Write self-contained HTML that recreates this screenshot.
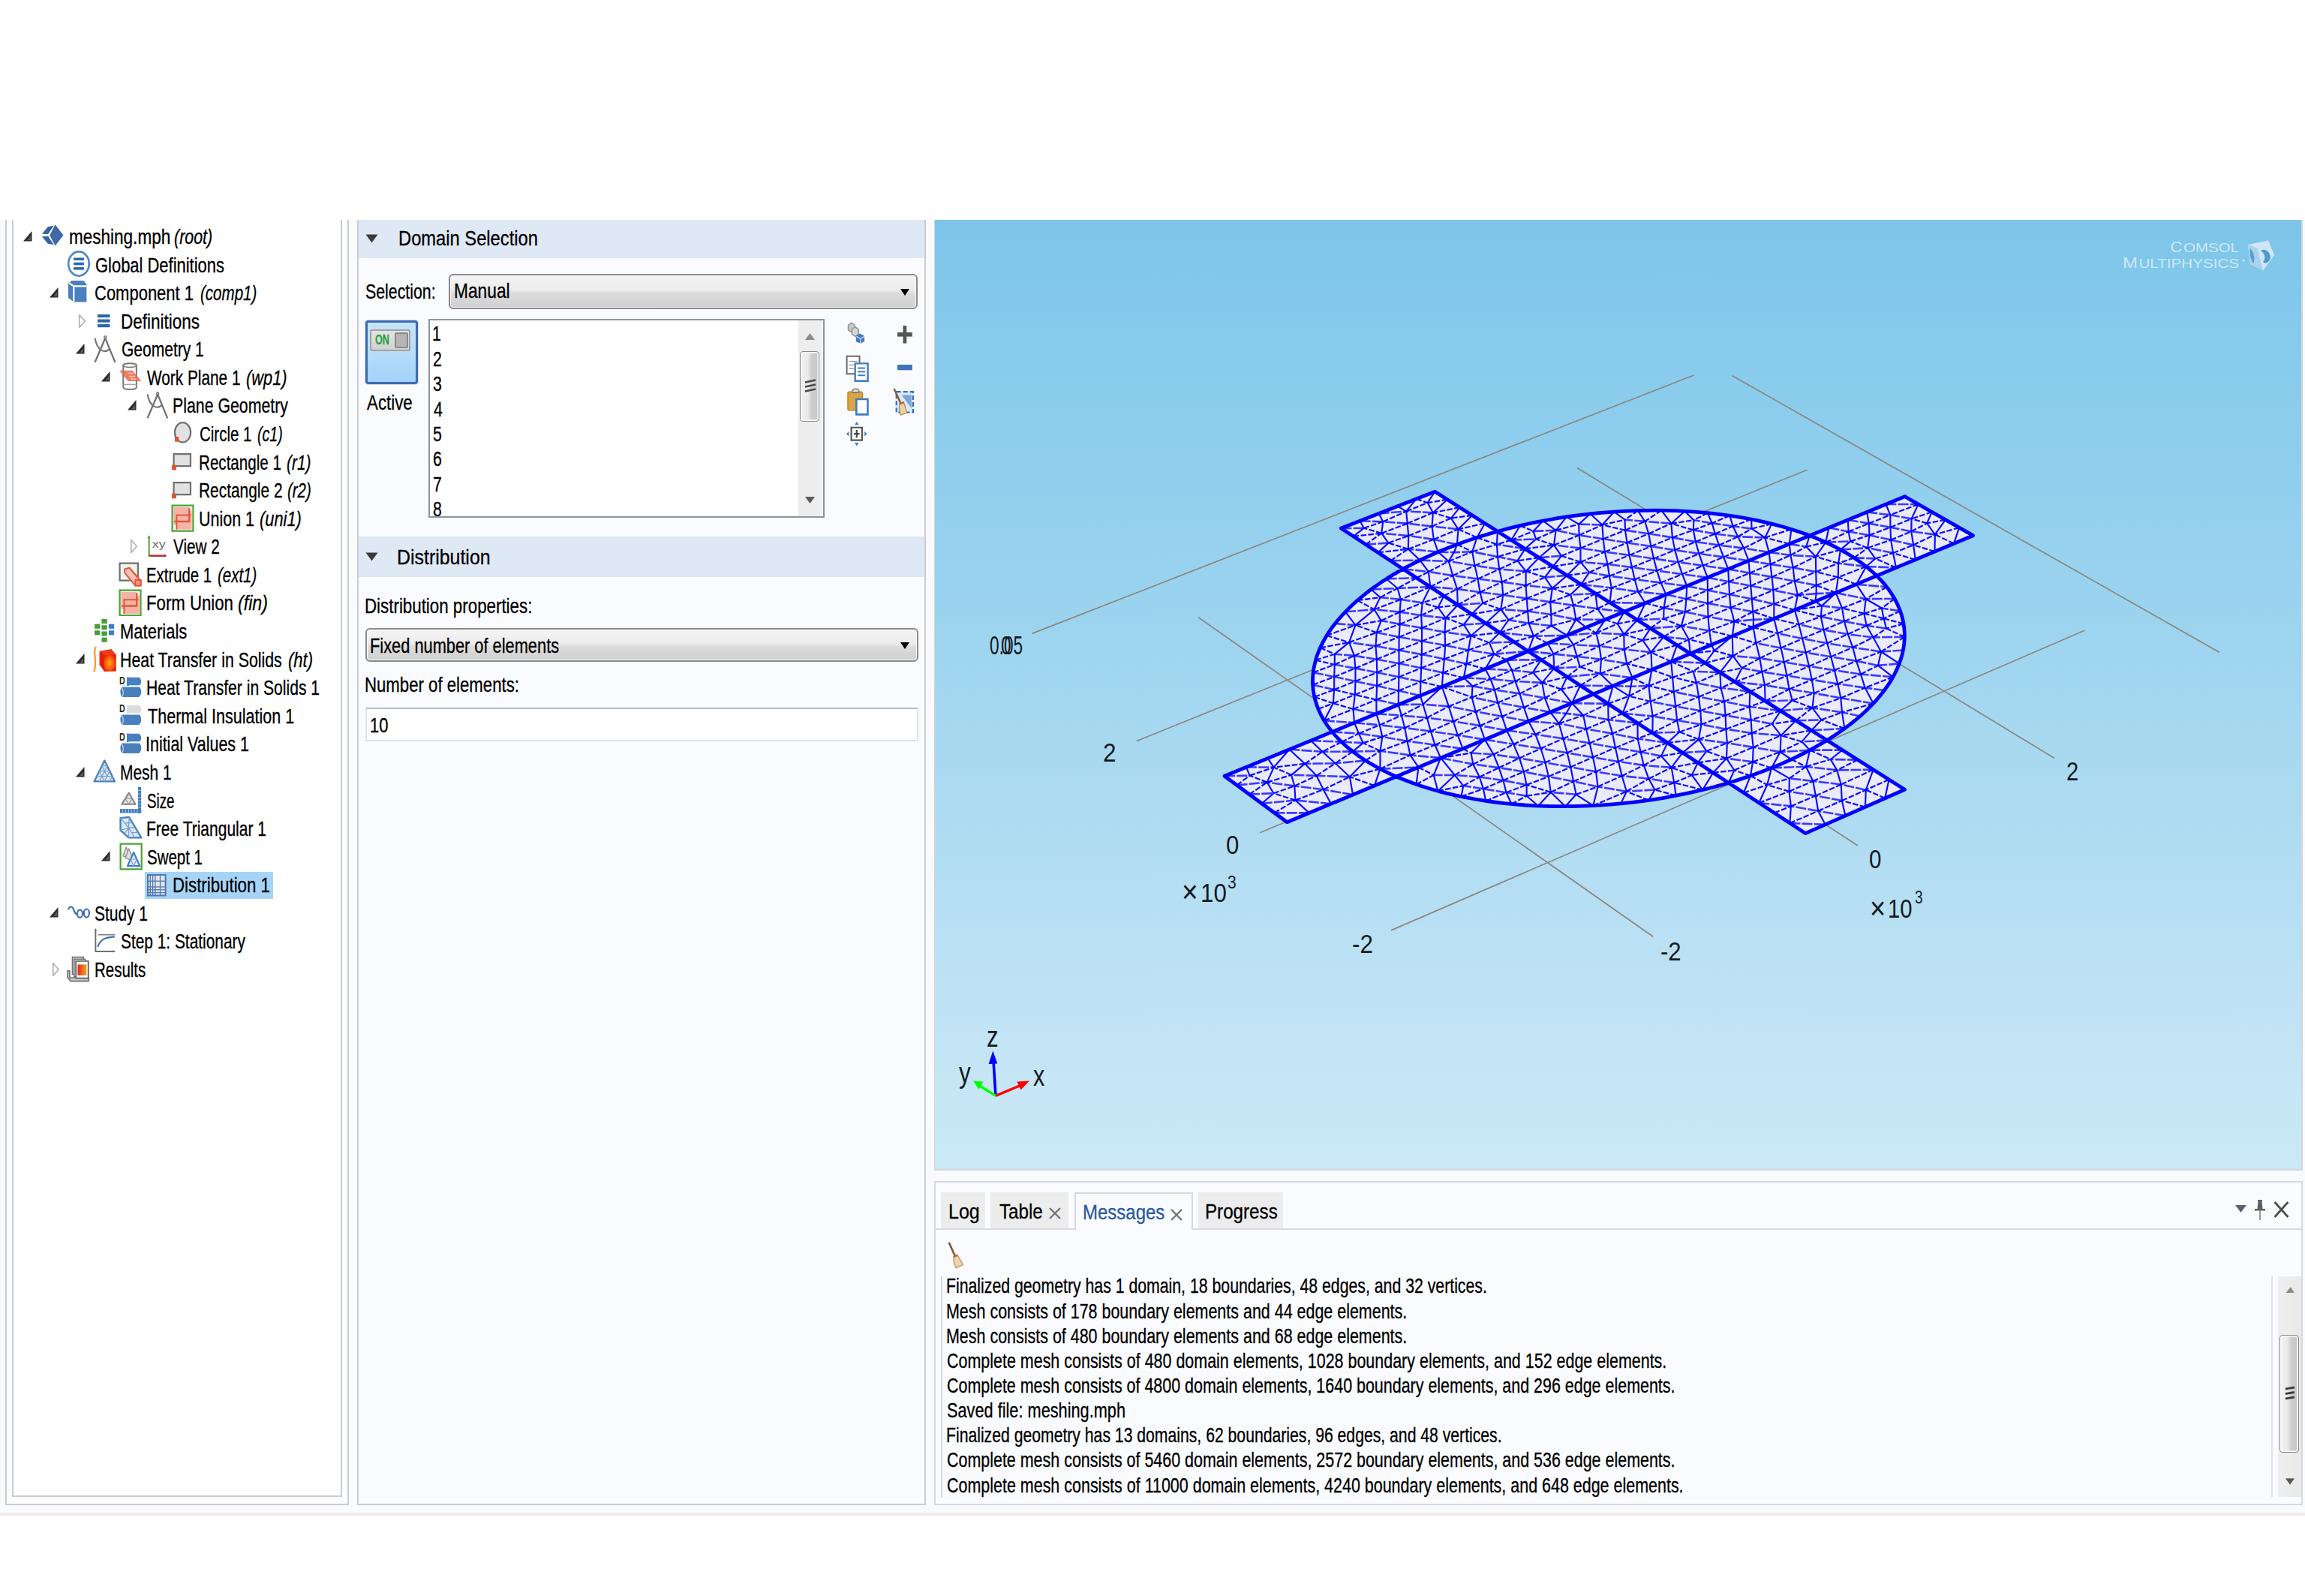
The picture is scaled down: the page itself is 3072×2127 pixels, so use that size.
<!DOCTYPE html><html><head><meta charset="utf-8"><title>COMSOL Multiphysics - meshing.mph</title><style>
html,body{margin:0;padding:0;background:#fff;}
body{width:3072px;height:2127px;position:relative;overflow:hidden;font-family:"Liberation Sans",sans-serif;color:#000;}
.a{position:absolute;box-sizing:border-box;}
.t{position:absolute;white-space:pre;line-height:1;transform-origin:0 0;color:#000;-webkit-text-stroke:0.3px currentColor;}
.combo{border:2px solid #8a8a8a;border-radius:6px;background:linear-gradient(#f4f4f4 0%,#ececec 45%,#dcdcdc 55%,#d0d0d0 100%);box-shadow:inset 0 0 0 1px #fafafa;}
</style></head><body>
<div class="a" style="left:0;top:293px;width:3072px;height:1723px;background:#f9fafd"></div>
<div class="a" style="left:0;top:2016px;width:3072px;height:4px;background:#eeebe9"></div>
<div class="a" style="left:7px;top:293px;width:458px;height:1713px;border:2px solid #cbcbd0;border-top:none;background:#fbfcfe"></div>
<div class="a" style="left:16px;top:293px;width:440px;height:1702px;border:2px solid #cbcbd0;border-top:none;background:#fff"></div>
<div class="a" style="left:192.5px;top:1161.8px;width:171.7px;height:36.6px;background:#a6d4f8"></div>
<div class="a" style="left:476px;top:293px;width:758px;height:1713px;border:2px solid #cbcbd0;border-top:none;background:#fafbfe"></div>
<div class="a" style="left:478px;top:293px;width:754px;height:51.2px;background:#dfe8f5"></div>
<svg class="a" style="left:487px;top:312.1px" width="17" height="12" viewBox="0 0 17 12"><path d="M0.5 0.5L16.5 0.5L8.5 11.5Z" fill="#3a3a3a"/></svg>
<div class="a" style="left:478px;top:714.6px;width:754px;height:54.8px;background:#dfe8f5"></div>
<svg class="a" style="left:487px;top:735.5px" width="17" height="12" viewBox="0 0 17 12"><path d="M0.5 0.5L16.5 0.5L8.5 11.5Z" fill="#3a3a3a"/></svg>
<div class="a combo" style="left:598px;top:365px;width:625px;height:47px"></div>
<svg class="a" style="left:1200px;top:385px" width="12" height="9" viewBox="0 0 12 9"><path d="M0 0L12 0L6 9Z" fill="#000"/></svg>
<div class="a" style="left:485.5px;top:425.5px;width:72.5px;height:87.5px;border-radius:5px;background:#d9dadd"></div>
<div class="a" style="left:487px;top:427px;width:69.5px;height:84.5px;border:3px solid #3c6bb8;border-radius:4px;background:linear-gradient(#c6e3fb,#bcdffa 40%,#a3d2f7)"></div>
<div class="a" style="left:492.8px;top:438.6px;width:54.4px;height:29.3px;border:2px solid #a2a2a2;border-radius:3px;background:linear-gradient(#e4e4e4,#d2d2d2)"></div>
<div class="a" style="left:525.8px;top:443px;width:18px;height:21px;border:2px solid #8a8a8a;border-radius:2px;background:#b4b4b4"></div>
<div class="a" style="left:571px;top:424.5px;width:528px;height:265.2px;border:2px solid #8c94a3;background:#fff;overflow:hidden"><div style="position:absolute;left:-573px;top:-426.5px;width:3072px;height:2127px"><span class="t" style="left:576.38px;top:431.40px;font-size:28px;transform:scaleX(0.7600);">1</span><span class="t" style="left:577.14px;top:464.78px;font-size:28px;transform:scaleX(0.7600);">2</span><span class="t" style="left:577.14px;top:498.16px;font-size:28px;transform:scaleX(0.7600);">3</span><span class="t" style="left:577.90px;top:531.54px;font-size:28px;transform:scaleX(0.7600);">4</span><span class="t" style="left:577.14px;top:564.92px;font-size:28px;transform:scaleX(0.7600);">5</span><span class="t" style="left:577.14px;top:598.30px;font-size:28px;transform:scaleX(0.7600);">6</span><span class="t" style="left:577.14px;top:631.68px;font-size:28px;transform:scaleX(0.7600);">7</span><span class="t" style="left:577.14px;top:665.06px;font-size:28px;transform:scaleX(0.7600);">8</span></div><div class="a" style="left:491px;top:0;width:31px;height:262px;background:#ededed"></div><div class="a" style="left:493.3px;top:41.5px;width:26.2px;height:94px;border:1.6px solid #8a8a8a;border-radius:4px;box-shadow:inset 0 0 0 1.6px #fcfcfc;background:linear-gradient(90deg,#f3f3f3 0%,#e9e9e9 42%,#cfcfcf 58%,#c6c6c6 100%)"></div><svg class="a" style="left:499px;top:76px" width="16" height="22" viewBox="0 0 16 22"><path d="M1 6.5L15 3.5M1 12.5L15 9.5M1 18.5L15 15.5" stroke="#4a4a4a" stroke-width="2.6"/></svg><svg class="a" style="left:500px;top:17px" width="13" height="9" viewBox="0 0 13 9"><path d="M0 9L6.5 0L13 9Z" fill="#8c8c8c"/></svg><svg class="a" style="left:500px;top:235px" width="13" height="9" viewBox="0 0 13 9"><path d="M0 0L13 0L6.5 9Z" fill="#5a5a5a"/></svg></div>
<svg style="position:absolute;left:1127.7px;top:429.4px;overflow:visible" width="24.6" height="28.5" viewBox="0 0 100 100" preserveAspectRatio="none" ><path d="M10 14L28 4L46 14L46 38L28 48L10 38Z" fill="#c8c8c8" stroke="#909090" stroke-width="1.4" vector-effect="non-scaling-stroke" stroke-linejoin="round"/><path d="M30 34L48 24L66 34L66 58L48 68L30 58Z" fill="#d4d4d4" stroke="#909090" stroke-width="1.4" vector-effect="non-scaling-stroke" stroke-linejoin="round"/><path d="M52 66L74 54L98 66L98 92L76 100L52 92Z" fill="#3f7cc0"/><path d="M54 68L76 78L98 68" fill="none" stroke="#cfe0f4" stroke-width="1.2" vector-effect="non-scaling-stroke" stroke-linecap="butt" stroke-linejoin="round"/><path d="M76 78L76 100" fill="none" stroke="#cfe0f4" stroke-width="1.2" vector-effect="non-scaling-stroke" stroke-linecap="butt" stroke-linejoin="round"/></svg>
<svg style="position:absolute;left:1195.7px;top:434.0px;overflow:visible" width="19.8" height="23.5" viewBox="0 0 100 100" preserveAspectRatio="none" ><rect x="38" y="0" width="24" height="100" fill="#555"/><rect x="0" y="38" width="100" height="24" fill="#555"/></svg>
<svg style="position:absolute;left:1127.7px;top:473.9px;overflow:visible" width="29.2" height="34.5" viewBox="0 0 100 100" preserveAspectRatio="none" ><rect x="2" y="2" width="58" height="68" fill="#fff" stroke="#6a6a6a" stroke-width="2" vector-effect="non-scaling-stroke"/><path d="M12 22L50 22" fill="none" stroke="#9a9a9a" stroke-width="1.4" vector-effect="non-scaling-stroke" stroke-linecap="butt" stroke-linejoin="round"/><path d="M12 36L34 36" fill="none" stroke="#9a9a9a" stroke-width="1.4" vector-effect="non-scaling-stroke" stroke-linecap="butt" stroke-linejoin="round"/><path d="M12 50L34 50" fill="none" stroke="#9a9a9a" stroke-width="1.4" vector-effect="non-scaling-stroke" stroke-linecap="butt" stroke-linejoin="round"/><rect x="40" y="30" width="58" height="68" fill="#fff" stroke="#3f7cc0" stroke-width="2.4" vector-effect="non-scaling-stroke"/><path d="M52 48L86 48" fill="none" stroke="#3f7cc0" stroke-width="2" vector-effect="non-scaling-stroke" stroke-linecap="butt" stroke-linejoin="round"/><path d="M52 62L86 62" fill="none" stroke="#3f7cc0" stroke-width="2" vector-effect="non-scaling-stroke" stroke-linecap="butt" stroke-linejoin="round"/><path d="M52 76L86 76" fill="none" stroke="#3f7cc0" stroke-width="2" vector-effect="non-scaling-stroke" stroke-linecap="butt" stroke-linejoin="round"/></svg>
<svg style="position:absolute;left:1195.7px;top:486.4px;overflow:visible" width="19.8" height="7.3" viewBox="0 0 100 100" preserveAspectRatio="none" ><rect x="0" y="0" width="100" height="100" fill="#3f73ba"/></svg>
<svg style="position:absolute;left:1129.9px;top:517.8px;overflow:visible" width="27.0" height="35.1" viewBox="0 0 100 100" preserveAspectRatio="none" ><rect x="0" y="12" width="72" height="70" fill="#d9a441" rx="6" stroke="#c08a28" stroke-width="1.6" vector-effect="non-scaling-stroke"/><path d="M20 14 C20 -4,56 -4,56 14Z" fill="#e8e8e8" stroke="#777" stroke-width="1.6" vector-effect="non-scaling-stroke" stroke-linecap="butt" stroke-linejoin="round"/><rect x="42" y="40" width="56" height="58" fill="#fff" stroke="#3f7cc0" stroke-width="2.6" vector-effect="non-scaling-stroke"/></svg>
<svg style="position:absolute;left:1191.3px;top:517.8px;overflow:visible" width="26.4" height="35.1" viewBox="0 0 100 100" preserveAspectRatio="none" ><rect x="14" y="12" width="84" height="78" fill="#dbe8f6" stroke="#2f6fc0" stroke-width="2.2" stroke-dasharray="6 3" vector-effect="non-scaling-stroke"/><path d="M40 24L90 24L90 74Z" fill="#7aa6d8"/><path d="M2 0L40 62" fill="none" stroke="#8a5a2a" stroke-width="2.4" vector-effect="non-scaling-stroke" stroke-linecap="butt" stroke-linejoin="round"/><path d="M30 56L50 50L68 92L36 100L28 78Z" fill="#ecd2a4" stroke="#b08850" stroke-width="1.2" vector-effect="non-scaling-stroke" stroke-linejoin="round"/><path d="M32 58L50 52" fill="none" stroke="#d84a2a" stroke-width="2.2" vector-effect="non-scaling-stroke" stroke-linecap="butt" stroke-linejoin="round"/></svg>
<svg style="position:absolute;left:1127.7px;top:562.3px;overflow:visible" width="27.5" height="32.3" viewBox="0 0 100 100" preserveAspectRatio="none" ><rect x="24" y="24" width="52" height="52" fill="#fff" stroke="#555" stroke-width="2.2" vector-effect="non-scaling-stroke"/><path d="M50 34L50 66" fill="none" stroke="#444" stroke-width="2.2" vector-effect="non-scaling-stroke" stroke-linecap="butt" stroke-linejoin="round"/><path d="M36 50L64 50" fill="none" stroke="#444" stroke-width="2.2" vector-effect="non-scaling-stroke" stroke-linecap="butt" stroke-linejoin="round"/><path d="M40 13L50 0L60 13Z" fill="#3f7cc0"/><path d="M40 87L50 100L60 87Z" fill="#3f7cc0"/><path d="M12 40L0 50L12 60Z" fill="#3f7cc0"/><path d="M88 40L100 50L88 60Z" fill="#3f7cc0"/></svg>
<div class="a combo" style="left:487px;top:836.5px;width:736.5px;height:45.5px"></div>
<svg class="a" style="left:1199.5px;top:856px" width="12" height="9" viewBox="0 0 12 9"><path d="M0 0L12 0L6 9Z" fill="#000"/></svg>
<div class="a" style="left:487px;top:942.5px;width:736.5px;height:45.5px;border:2px solid #dfe3ec;border-top-color:#b9bdc9;background:#fff"></div>
<div class="a" style="left:1245px;top:293px;width:1824px;height:1267px;background:#d4d6da"></div>
<div class="a" style="left:1246px;top:293px;width:1821px;height:1264.5px;background:linear-gradient(#7dc5e9 0%,#86caec 12%,#9ad3ef 40%,#b0dcf2 65%,#c4e5f5 88%,#cbe9f6 100%)"></div>
<svg class="a" style="left:0;top:0" width="3072" height="2127" viewBox="0 0 3072 2127"><path d="M1854.0 1239.9L2778.1 840.2M1597.1 822.8L2203.1 1248.3M1679.2 1109.8L2588.0 730.1M1854.1 721.3L2476.0 1127.0M1514.8 987.6L2408.5 626.3M2101.8 623.5L2738.1 1010.6M1375.3 844.4L2257.6 500.0M2308.7 500.7L2958.1 869.4" fill="none" stroke="#8b8680" stroke-width="1.7"/><path d="M2406.1 1110.6L2538.5 1052.3L1912.4 655.2L1787.4 704.1ZM1715.4 1095.7L2629.5 713.7L2538.6 661.7L1632.0 1034.3ZM2461.1 737.2L2452.9 732.6L2444.4 728.1L2435.6 723.8L2426.4 719.7L2416.9 715.8L2407.2 712.0L2397.1 708.5L2386.7 705.2L2376.1 702.0L2365.2 699.1L2354.1 696.4L2342.8 693.8L2331.2 691.5L2319.5 689.4L2307.5 687.5L2295.4 685.8L2283.1 684.4L2270.7 683.1L2258.1 682.1L2245.4 681.3L2232.6 680.7L2219.7 680.3L2206.7 680.2L2193.7 680.3L2180.6 680.6L2167.5 681.1L2154.3 681.8L2141.1 682.8L2128.0 683.9L2114.8 685.3L2101.7 686.9L2088.6 688.7L2075.6 690.7L2062.7 693.0L2049.8 695.4L2037.1 698.0L2024.4 700.9L2011.9 703.9L1999.6 707.2L1987.4 710.6L1975.3 714.2L1963.5 718.0L1951.8 722.0L1940.3 726.2L1929.1 730.5L1918.1 735.0L1907.3 739.7L1896.9 744.5L1886.6 749.5L1876.7 754.6L1867.0 759.9L1857.7 765.3L1848.7 770.9L1840.0 776.6L1831.6 782.4L1823.6 788.3L1816.0 794.4L1808.7 800.5L1801.8 806.7L1795.3 813.1L1789.2 819.5L1783.5 826.0L1778.2 832.5L1773.3 839.2L1768.9 845.8L1764.9 852.6L1761.4 859.3L1758.3 866.1L1755.6 872.9L1753.5 879.8L1751.8 886.6L1750.5 893.4L1749.8 900.3L1749.5 907.1L1749.7 913.9L1750.3 920.6L1751.5 927.4L1753.1 934.0L1755.3 940.6L1757.9 947.2L1761.0 953.6L1764.5 960.0L1768.6 966.3L1773.1 972.4L1778.1 978.5L1783.6 984.5L1789.5 990.3L1795.9 996.0L1802.8 1001.5L1810.1 1006.9L1817.8 1012.2L1825.9 1017.2L1834.5 1022.1L1843.5 1026.8L1852.9 1031.4L1862.6 1035.7L1872.8 1039.8L1883.3 1043.8L1894.1 1047.5L1905.3 1051.0L1916.8 1054.3L1928.6 1057.3L1940.8 1060.1L1953.2 1062.7L1965.8 1065.0L1978.7 1067.1L1991.8 1069.0L2005.2 1070.6L2018.7 1071.9L2032.4 1073.0L2046.2 1073.8L2060.2 1074.3L2074.3 1074.6L2088.5 1074.7L2102.8 1074.4L2117.2 1073.9L2131.5 1073.2L2145.9 1072.2L2160.3 1070.9L2174.7 1069.4L2189.0 1067.6L2203.3 1065.6L2217.5 1063.3L2231.5 1060.7L2245.5 1057.9L2259.3 1054.9L2273.0 1051.7L2286.5 1048.2L2299.7 1044.5L2312.8 1040.6L2325.7 1036.4L2338.3 1032.1L2350.6 1027.5L2362.6 1022.8L2374.4 1017.9L2385.8 1012.8L2396.9 1007.5L2407.7 1002.0L2418.1 996.4L2428.2 990.7L2437.8 984.8L2447.1 978.8L2456.0 972.6L2464.4 966.4L2472.5 960.0L2480.1 953.5L2487.2 947.0L2493.9 940.3L2500.2 933.6L2506.0 926.9L2511.3 920.0L2516.2 913.2L2520.6 906.3L2524.5 899.3L2527.9 892.4L2530.8 885.4L2533.3 878.5L2535.3 871.6L2536.8 864.6L2537.7 857.7L2538.3 850.9L2538.3 844.0L2537.8 837.3L2536.9 830.6L2535.5 823.9L2533.6 817.4L2531.2 810.9L2528.4 804.5L2525.2 798.2L2521.4 792.0L2517.3 785.9L2512.7 779.9L2507.7 774.1L2502.2 768.4L2496.3 762.8L2490.1 757.4L2483.4 752.1L2476.3 747.0L2468.9 742.0Z" fill="#ebebff" stroke="none"/><path d="M1715.4 1095.7L1698.5 1083.3M1698.5 1083.3L1681.7 1070.9M1681.7 1070.9L1665.1 1058.6M1681.7 1070.9L1697.4 1057.2M1665.1 1058.6L1648.5 1046.4M1648.5 1046.4L1632.0 1034.3M1660.9 1022.4L1665.6 1033.6M1744.7 1083.4L1726.5 1066.5M1689.7 1010.6L1697.6 1022.6M1773.9 1071.2L1763.7 1052.2M1718.4 998.8L1739.0 1017.8M1718.4 998.8L1697.6 1022.6M1803.0 1059.1L1798.9 1035.3M1747.0 987.0L1762.5 1001.8M1831.9 1047.0L1839.4 1024.7M1802.8 1001.6L1820.0 1013.6M1802.8 1001.6L1788.0 988.8M1802.8 1001.6L1816.7 990.1M1820.0 1013.6L1798.9 1035.3M1788.0 988.8L1775.4 975.3M1839.4 1024.7L1839.5 1000.8M1775.4 975.3L1764.8 960.4M1764.8 960.4L1756.9 944.9M1764.8 960.4L1776.8 937.3M1887.5 1045.3L1890.5 1022.5M1756.9 944.9L1751.8 928.9M1916.4 1054.2L1938.8 1033.0M1916.4 1054.2L1910.7 1033.0M1751.8 928.9L1749.6 912.7M1805.0 963.2L1811.0 977.6M1805.0 963.2L1803.5 945.0M1890.5 1022.5L1879.5 1006.4M1947.5 1061.6L1950.3 1047.1M1749.6 912.7L1750.1 896.3M1980.2 1067.4L1976.9 1051.3M1750.1 896.3L1753.5 879.8M1834.4 951.1L1838.8 966.2M1834.4 951.1L1834.4 932.6M1920.1 1010.1L1938.8 1033.0M1920.1 1010.1L1910.7 1033.0M1920.1 1010.1L1912.4 992.7M2014.5 1071.5L2007.5 1056.2M1753.5 879.8L1759.5 863.3M2050.0 1074.0L2034.7 1060.7M2050.0 1074.0L2066.8 1055.8M1863.7 939.1L1867.9 953.6M1863.7 939.1L1864.0 920.5M1949.6 997.8L1942.8 979.8M1759.5 863.3L1768.2 847.0M2086.3 1074.7L2100.6 1058.8M2086.3 1074.7L2066.8 1055.8M1768.2 847.0L1779.4 831.0M1892.8 927.1L1896.5 938.7M1892.8 927.1L1893.4 908.6M1978.9 985.6L1990.6 1005.5M1978.9 985.6L1960.5 1003.5M1978.9 985.6L1972.5 967.1M2123.2 1073.7L2100.6 1058.8M2123.2 1073.7L2129.6 1048.4M1779.4 831.0L1793.1 815.3M1921.8 915.2L1930.8 941.4M1921.8 915.2L1896.5 938.7M1921.8 915.2L1923.2 896.6M2008.1 973.4L2017.2 991.8M2008.1 973.4L2001.9 954.8M2160.3 1070.9L2167.8 1054.8M1793.1 815.3L1809.1 800.1M1793.1 815.3L1806.5 833.1M1950.8 903.3L1962.5 914.4M1950.8 903.3L1954.4 884.6M2037.2 961.2L2046.3 978.7M2037.2 961.2L2030.9 942.7M2197.2 1066.5L2205.4 1052.5M1809.1 800.1L1827.4 785.5M1979.5 891.5L1986.5 905.0M1979.5 891.5L1991.2 871.7M2066.1 949.1L2077.8 964.2M2066.1 949.1L2058.9 930.2M2233.6 1060.3L2231.3 1043.1M1827.4 785.5L1839.5 796.1M2269.2 1052.6L2283.2 1029.8M2269.2 1052.6L2254.8 1032.9M2008.2 879.7L2015.1 893.2M2095.0 937.1L2106.1 913.5M2095.0 937.1L2110.2 953.4M2095.0 937.1L2087.3 950.9M2095.0 937.1L2080.8 918.5M1847.7 771.5L1862.6 784.0M2406.1 1110.6L2385.4 1097.0M2385.4 1097.0L2364.7 1083.4M2385.4 1097.0L2386.9 1074.4M2364.7 1083.4L2344.3 1070.0M2344.3 1070.0L2323.9 1056.6M2344.3 1070.0L2355.2 1046.0M2323.9 1056.6L2303.7 1043.3M2323.9 1056.6L2333.0 1033.9M2303.7 1043.3L2283.2 1029.8M2303.7 1043.3L2311.4 1026.6M2283.2 1029.8L2262.8 1016.4M2283.2 1029.8L2300.9 1010.7M2262.8 1016.4L2242.5 1003.1M2262.8 1016.4L2254.8 1032.9M2262.8 1016.4L2274.4 1001.1M2242.5 1003.1L2222.4 989.9M2242.5 1003.1L2227.6 1022.9M2242.5 1003.1L2264.0 985.3M2222.4 989.9L2202.4 976.8M2222.4 989.9L2214.0 1007.6M2222.4 989.9L2238.3 975.5M2202.4 976.8L2182.5 963.7M2202.4 976.8L2202.7 954.6M2182.5 963.7L2162.8 950.7M2182.5 963.7L2182.7 984.4M2162.8 950.7L2143.2 937.9M2162.8 950.7L2171.1 927.7M2143.2 937.9L2123.7 925.1M2143.2 937.9L2149.7 914.2M2143.2 937.9L2143.6 959.1M2123.7 925.1L2106.1 913.5M2106.1 913.5L2088.6 902.0M2088.6 902.0L2071.2 890.6M2088.6 902.0L2080.8 918.5M2071.2 890.6L2053.9 879.2M2071.2 890.6L2055.3 909.9M2071.2 890.6L2070.5 871.5M2053.9 879.2L2036.8 867.9M2053.9 879.2L2043.0 896.2M2036.8 867.9L2017.7 855.4M2036.8 867.9L2044.1 847.8M2017.7 855.4L1998.8 843.0M1998.8 843.0L1980.1 830.7M1998.8 843.0L1985.0 856.7M1998.8 843.0L2010.5 826.2M1980.1 830.7L1961.4 818.4M1980.1 830.7L1960.4 847.3M1980.1 830.7L2000.3 812.0M1961.4 818.4L1942.9 806.3M1961.4 818.4L1950.8 832.5M1961.4 818.4L1976.1 803.7M1942.9 806.3L1924.5 794.1M1942.9 806.3L1926.6 823.7M1942.9 806.3L1942.0 785.0M1924.5 794.1L1906.2 782.1M1924.5 794.1L1916.6 809.5M1906.2 782.1L1888.0 770.2M1906.2 782.1L1895.6 803.4M1906.2 782.1L1903.9 762.0M1888.0 770.2L1869.9 758.3M1869.9 758.3L1853.2 747.3M1853.2 747.3L1836.6 736.4M1836.6 736.4L1820.1 725.6M1836.6 736.4L1850.4 723.6M1820.1 725.6L1803.7 714.8M1803.7 714.8L1787.4 704.1M1803.7 714.8L1817.6 703.8M2333.0 1033.9L2336.0 1015.4M1892.5 746.6L1903.9 762.0M1892.5 746.6L1876.8 731.7M2432.8 1098.9L2423.2 1080.8M2149.7 914.2L2171.1 927.7M2149.7 914.2L2132.6 897.8M2062.6 857.3L2070.5 871.5M1812.6 694.3L1817.6 703.8M2361.0 1023.5L2355.2 1046.0M2361.0 1023.5L2384.8 1037.4M2361.0 1023.5L2372.6 1002.1M1916.6 735.6L1930.7 748.0M1916.6 735.6L1910.8 718.9M2459.4 1087.1L2454.8 1067.0M2175.6 903.4L2173.5 914.8M2175.6 903.4L2168.1 884.4M2088.3 846.8L2097.0 859.2M2088.3 846.8L2067.5 834.0M2088.3 846.8L2100.4 825.6M1837.7 684.4L1843.2 695.3M2485.9 1075.5L2486.8 1052.7M2201.5 892.6L2197.4 914.0M2201.5 892.6L2200.5 869.3M2113.9 836.2L2100.4 825.6M1862.7 674.7L1874.2 681.4M2387.4 1012.0L2372.6 1002.1M1941.9 725.6L1937.9 736.1M1941.9 725.6L1943.5 705.3M2512.2 1063.8L2517.5 1039.0M2227.2 881.8L2235.0 859.8M2227.2 881.8L2229.1 902.5M2139.4 825.8L2127.2 843.6M2139.4 825.8L2128.9 811.2M1887.6 664.9L1874.2 681.4M2412.1 999.7L2407.0 1021.7M2412.1 999.7L2401.5 988.4M1968.4 716.4L1979.0 697.4M1968.4 716.4L1962.2 735.3M2538.5 1052.3L2517.5 1039.0M2517.5 1039.0L2496.7 1025.7M2496.7 1025.7L2476.0 1012.6M2496.7 1025.7L2486.8 1052.7M2476.0 1012.6L2455.4 999.6M2455.4 999.6L2434.9 986.6M2455.4 999.6L2439.7 1012.0M2434.9 986.6L2414.2 973.4M2414.2 973.4L2393.5 960.3M2414.2 973.4L2401.5 988.4M2414.2 973.4L2427.3 959.4M2393.5 960.3L2373.0 947.3M2393.5 960.3L2373.6 980.2M2373.0 947.3L2352.7 934.4M2373.0 947.3L2361.7 964.8M2373.0 947.3L2388.7 933.4M2352.7 934.4L2332.4 921.6M2352.7 934.4L2352.0 913.2M2332.4 921.6L2312.3 908.8M2332.4 921.6L2331.6 941.8M2312.3 908.8L2292.4 896.2M2312.3 908.8L2321.6 890.3M2292.4 896.2L2272.5 883.6M2292.4 896.2L2293.4 916.7M2292.4 896.2L2309.5 874.1M2272.5 883.6L2252.8 871.1M2272.5 883.6L2284.9 867.2M2252.8 871.1L2235.0 859.8M2252.8 871.1L2250.8 852.2M2235.0 859.8L2217.3 848.6M2217.3 848.6L2199.7 837.4M2217.3 848.6L2200.5 869.3M2199.7 837.4L2182.2 826.3M2199.7 837.4L2189.3 853.2M2182.2 826.3L2164.8 815.3M2182.2 826.3L2192.7 803.8M2182.2 826.3L2164.3 845.4M2164.8 815.3L2145.6 803.1M2164.8 815.3L2155.6 831.3M2145.6 803.1L2126.4 791.0M2145.6 803.1L2147.7 783.5M2126.4 791.0L2107.4 778.9M2126.4 791.0L2128.9 811.2M2107.4 778.9L2088.5 766.9M2107.4 778.9L2093.2 792.6M2107.4 778.9L2118.0 762.9M2088.5 766.9L2069.8 755.0M2088.5 766.9L2068.9 784.0M2088.5 766.9L2106.5 749.1M2069.8 755.0L2051.1 743.2M2069.8 755.0L2058.9 769.4M2069.8 755.0L2081.0 740.8M2051.1 743.2L2032.6 731.4M2051.1 743.2L2033.7 761.3M2051.1 743.2L2071.0 726.4M2032.6 731.4L2014.2 719.8M2032.6 731.4L2022.4 747.3M2032.6 731.4L2047.0 718.4M2014.2 719.8L1995.9 708.2M2014.2 719.8L2025.9 700.5M1995.9 708.2L1979.0 697.4M1995.9 708.2L1994.9 725.5M1979.0 697.4L1962.2 686.8M1962.2 686.8L1945.5 676.2M1962.2 686.8L1943.5 705.3M1945.5 676.2L1928.9 665.7M1945.5 676.2L1933.9 690.6M1928.9 665.7L1912.4 655.2M1928.9 665.7L1909.9 683.2M1912.4 655.2L1902.6 670.1M2280.9 859.4L2284.9 867.2M2280.9 859.4L2278.1 840.5M2192.7 803.8L2183.1 788.6M2458.3 970.9L2479.0 954.5M2458.3 970.9L2455.0 949.3M2056.6 694.1L2073.6 706.8M2056.6 694.1L2043.5 707.9M2479.0 954.5L2496.7 937.5M2308.8 847.7L2309.5 874.1M2308.8 847.7L2284.9 867.2M2308.8 847.7L2311.4 828.1M2220.5 792.4L2217.6 810.1M2220.5 792.4L2213.5 776.6M2087.8 688.8L2073.6 706.8M2087.8 688.8L2104.2 698.6M2496.7 937.5L2511.3 920.0M2496.7 937.5L2485.6 916.6M2336.6 836.1L2340.5 857.1M2336.6 836.1L2337.1 825.9M2248.2 781.0L2247.4 798.2M2248.2 781.0L2242.0 765.2M2119.4 684.8L2135.4 699.5M2119.4 684.8L2104.2 698.6M2511.3 920.0L2522.9 902.3M2364.3 824.5L2369.1 844.1M2364.3 824.5L2364.3 805.0M2275.7 769.7L2276.0 786.7M2275.7 769.7L2269.8 753.8M2151.2 682.0L2135.4 699.5M2151.2 682.0L2165.6 692.7M2522.9 902.3L2531.3 884.4M2522.9 902.3L2503.0 886.9M2391.9 813.0L2397.4 832.3M2391.9 813.0L2395.9 793.0M2303.2 758.4L2304.1 775.2M2303.2 758.4L2297.1 742.4M2182.9 680.5L2192.2 694.8M2531.3 884.4L2536.4 866.5M2531.3 884.4L2507.0 868.5M2214.3 680.2L2227.4 697.7M2419.4 801.5L2428.0 807.4M2419.4 801.5L2420.6 791.1M2330.5 747.2L2331.9 763.7M2330.5 747.2L2324.1 730.6M2536.4 866.5L2538.3 848.8M2245.4 681.3L2227.4 697.7M2245.4 681.3L2257.4 693.2M2538.3 848.8L2537.0 831.4M2446.8 790.1L2455.1 810.5M2446.8 790.1L2428.0 807.4M2446.8 790.1L2449.8 769.4M2357.7 736.0L2359.5 752.0M2357.7 736.0L2352.3 716.4M2275.8 683.6L2281.7 697.2M2537.0 831.4L2532.6 814.4M2305.4 687.2L2309.6 701.3M2532.6 814.4L2525.0 798.0M2474.0 778.7L2487.1 755.0M2474.0 778.7L2486.8 798.2M2384.8 724.9L2387.4 705.4M2384.8 724.9L2386.4 739.9M2334.0 692.0L2334.6 704.6M2525.0 798.0L2514.5 782.3M2361.4 698.1L2352.3 716.4M2514.5 782.3L2501.1 767.3M2501.1 767.3L2487.1 755.0M2411.8 713.8L2407.2 728.6M2487.1 755.0L2471.0 743.4M2487.1 755.0L2499.4 744.4M2433.3 722.7L2437.4 703.3M2433.3 722.7L2419.9 741.8M2471.0 743.4L2453.0 732.6M2453.0 732.6L2450.1 750.7M2453.0 732.6L2466.1 721.4M2527.0 756.5L2523.1 737.1M2552.8 745.8L2550.1 726.3M2462.8 692.8L2463.6 708.5M2578.5 735.0L2578.9 712.4M2488.2 682.4L2490.8 697.6M2604.0 724.4L2611.1 703.2M2513.4 672.0L2519.3 686.3M2592.8 692.7L2578.9 712.4M2574.7 682.3L2568.2 697.4M2556.6 672.0L2547.6 691.4M2423.2 1080.8L2419.8 1060.5M2454.8 1067.0L2453.7 1045.5M2386.9 1074.4L2384.5 1054.8M2419.8 1060.5L2416.3 1041.0M2453.7 1045.5L2448.2 1026.4M2384.5 1054.8L2384.8 1037.4M2416.3 1041.0L2407.0 1021.7M2448.2 1026.4L2439.7 1012.0M2311.4 1026.6L2300.9 1010.7M2336.0 1015.4L2336.7 995.9M2372.6 1002.1L2373.6 980.2M2205.4 1052.5L2197.4 1037.8M2231.3 1043.1L2227.6 1022.9M2300.9 1010.7L2301.9 990.2M2336.7 995.9L2334.7 977.0M2373.6 980.2L2361.7 964.8M2427.3 959.4L2415.5 943.4M2455.0 949.3L2453.3 930.3M2167.8 1054.8L2161.6 1034.0M2197.4 1037.8L2190.7 1019.9M2227.6 1022.9L2214.0 1007.6M2274.4 1001.1L2264.0 985.3M2301.9 990.2L2300.3 971.7M2334.7 977.0L2333.6 959.3M2415.5 943.4L2417.7 923.8M2453.3 930.3L2449.3 911.4M2485.6 916.6L2479.9 898.5M2100.6 1058.8L2097.0 1041.4M2129.6 1048.4L2127.0 1028.4M2161.6 1034.0L2157.0 1015.0M2190.7 1019.9L2186.6 1002.2M2264.0 985.3L2267.4 965.5M2300.3 971.7L2299.6 953.4M2333.6 959.3L2331.6 941.8M2388.7 933.4L2384.6 918.5M2417.7 923.8L2414.8 905.9M2449.3 911.4L2444.9 893.3M2479.9 898.5L2474.0 880.9M2503.0 886.9L2507.0 868.5M2034.7 1060.7L2034.6 1046.0M2066.8 1055.8L2063.8 1035.0M2097.0 1041.4L2093.3 1022.3M2127.0 1028.4L2123.0 1009.3M2157.0 1015.0L2152.9 996.5M2186.6 1002.2L2182.7 984.4M2238.3 975.5L2235.1 960.1M2267.4 965.5L2266.3 947.3M2299.6 953.4L2298.0 934.9M2384.6 918.5L2381.4 900.5M2414.8 905.9L2411.0 887.9M2444.9 893.3L2440.2 875.3M2474.0 880.9L2469.3 862.8M2507.0 868.5L2496.5 849.5M2007.5 1056.2L2003.4 1040.1M2034.6 1046.0L2030.8 1028.5M2063.8 1035.0L2059.4 1016.2M2093.3 1022.3L2088.7 1003.3M2123.0 1009.3L2118.6 990.4M2152.9 996.5L2149.1 977.6M2235.1 960.1L2233.2 941.3M2266.3 947.3L2263.9 928.7M2298.0 934.9L2293.4 916.7M2352.0 913.2L2348.4 895.4M2381.4 900.5L2377.8 882.4M2411.0 887.9L2406.7 869.7M2440.2 875.3L2435.2 857.3M2469.3 862.8L2462.8 845.2M2496.5 849.5L2487.7 833.7M2514.0 837.5L2510.6 824.2M1976.9 1051.3L1971.8 1035.5M2003.4 1040.1L1997.7 1023.1M2030.8 1028.5L2025.0 1010.4M2059.4 1016.2L2053.5 997.5M2088.7 1003.3L2083.3 984.3M2118.6 990.4L2113.9 971.5M2149.1 977.6L2143.6 959.1M2202.7 954.6L2199.7 935.0M2233.2 941.3L2230.8 921.9M2263.9 928.7L2261.1 910.1M2348.4 895.4L2345.3 877.2M2377.8 882.4L2373.6 863.6M2406.7 869.7L2402.1 851.1M2435.2 857.3L2430.4 839.4M2462.8 845.2L2457.9 828.1M2487.7 833.7L2484.3 817.6M2510.6 824.2L2507.9 810.5M1950.3 1047.1L1938.8 1033.0M1971.8 1035.5L1963.3 1018.4M1997.7 1023.1L1990.6 1005.5M2025.0 1010.4L2017.2 991.8M2053.5 997.5L2046.3 978.7M2083.3 984.3L2077.8 964.2M2113.9 971.5L2110.2 953.4M2199.7 935.0L2197.4 914.0M2230.8 921.9L2229.1 902.5M2261.1 910.1L2256.5 894.8M2321.6 890.3L2309.5 874.1M2345.3 877.2L2340.5 857.1M2373.6 863.6L2369.1 844.1M2402.1 851.1L2397.4 832.3M2430.4 839.4L2426.8 821.8M2457.9 828.1L2455.1 810.5M2484.3 817.6L2486.8 798.2M2507.9 810.5L2486.8 798.2M1963.3 1018.4L1960.5 1003.5M2077.8 964.2L2087.3 950.9M2171.1 927.7L2173.5 914.8M2426.8 821.8L2428.0 807.4M2337.1 825.9L2336.3 815.2M2420.6 791.1L2420.7 780.0M1726.5 1066.5L1725.3 1047.5M1763.7 1052.2L1754.6 1033.8M1798.9 1035.3L1779.6 1017.3M1879.5 1006.4L1875.5 987.7M1912.4 992.7L1906.9 974.6M1942.8 979.8L1936.9 961.2M1972.5 967.1L1966.6 948.3M2001.9 954.8L1996.3 936.4M2030.9 942.7L2025.4 924.4M2058.9 930.2L2055.3 909.9M2132.6 897.8L2134.0 878.7M2168.1 884.4L2164.6 865.3M2200.5 869.3L2189.3 853.2M2250.8 852.2L2240.8 834.3M2278.1 840.5L2276.4 821.9M2311.4 828.1L2306.5 809.8M2336.3 815.2L2334.7 798.2M2364.3 805.0L2363.4 786.6M2395.9 793.0L2391.7 774.5M2420.7 780.0L2420.2 762.1M2449.8 769.4L2450.1 750.7M2499.4 744.4L2489.1 730.2M2523.1 737.1L2520.1 719.6M2550.1 726.3L2547.3 708.3M2578.9 712.4L2568.2 697.4M1697.4 1057.2L1688.7 1042.6M1725.3 1047.5L1721.0 1032.8M1754.6 1033.8L1739.0 1017.8M1779.6 1017.3L1762.5 1001.8M1839.5 1000.8L1842.3 982.0M1875.5 987.7L1872.2 970.0M1906.9 974.6L1901.8 956.5M1936.9 961.2L1930.8 941.4M1966.6 948.3L1961.6 929.2M1996.3 936.4L1991.9 919.5M2025.4 924.4L2019.5 908.0M2055.3 909.9L2043.0 896.2M2105.6 888.8L2101.7 874.9M2134.0 878.7L2131.5 861.1M2164.6 865.3L2164.3 845.4M2240.8 834.3L2245.9 815.5M2276.4 821.9L2276.1 804.0M2306.5 809.8L2305.0 792.3M2334.7 798.2L2333.3 780.7M2363.4 786.6L2361.4 768.9M2391.7 774.5L2389.7 756.5M2420.2 762.1L2419.9 741.8M2489.1 730.2L2491.5 713.3M2520.1 719.6L2519.4 702.7M2547.3 708.3L2547.6 691.4M1688.7 1042.6L1697.6 1022.6M1721.0 1032.8L1739.0 1017.8M1816.7 990.1L1811.0 977.6M1842.3 982.0L1838.8 966.2M1872.2 970.0L1867.9 953.6M1901.8 956.5L1896.5 938.7M1961.6 929.2L1962.5 914.4M1991.9 919.5L1986.5 905.0M2019.5 908.0L2015.1 893.2M2101.7 874.9L2097.0 859.2M2131.5 861.1L2127.2 843.6M2164.3 845.4L2155.6 831.3M2217.2 824.7L2217.6 810.1M2245.9 815.5L2247.4 798.2M2276.1 804.0L2276.0 786.7M2305.0 792.3L2304.1 775.2M2333.3 780.7L2331.9 763.7M2361.4 768.9L2359.5 752.0M2389.7 756.5L2386.4 739.9M2419.9 741.8L2407.2 728.6M2466.1 721.4L2463.6 708.5M2491.5 713.3L2490.8 697.6M2519.4 702.7L2519.3 686.3M1803.5 945.0L1805.8 925.9M1834.4 932.6L1835.1 914.1M1864.0 920.5L1864.4 902.2M1893.4 908.6L1894.2 890.3M1923.2 896.6L1924.9 878.3M1954.4 884.6L1957.0 866.4M1991.2 871.7L1985.0 856.7M2044.1 847.8L2037.4 830.7M2067.5 834.0L2067.4 819.0M2100.4 825.6L2097.1 806.9M2183.1 788.6L2178.7 772.2M2213.5 776.6L2208.3 760.6M2242.0 765.2L2236.7 749.2M2269.8 753.8L2264.4 737.9M2297.1 742.4L2291.1 726.6M2324.1 730.6L2316.2 715.2M2352.3 716.4L2334.6 704.6M1776.8 937.3L1778.1 919.1M1805.8 925.9L1806.5 907.9M1835.1 914.1L1835.3 896.2M1864.4 902.2L1864.6 884.2M1894.2 890.3L1894.8 872.2M1924.9 878.3L1926.2 860.1M1957.0 866.4L1960.4 847.3M2037.4 830.7L2036.1 814.6M2067.4 819.0L2066.2 802.4M2097.1 806.9L2093.2 792.6M2147.7 783.5L2144.9 767.6M2178.7 772.2L2175.0 756.1M2208.3 760.6L2204.0 744.5M2236.7 749.2L2232.3 733.1M2264.4 737.9L2259.8 722.0M2291.1 726.6L2285.8 711.4M2316.2 715.2L2309.6 701.3M1778.1 919.1L1778.2 902.0M1806.5 907.9L1806.4 890.6M1835.3 896.2L1834.8 878.7M1864.6 884.2L1864.5 866.5M1894.8 872.2L1895.0 854.4M1926.2 860.1L1925.6 842.4M1960.4 847.3L1950.8 832.5M2010.5 826.2L2000.3 812.0M2036.1 814.6L2034.7 797.6M2066.2 802.4L2068.9 784.0M2144.9 767.6L2142.5 751.9M2175.0 756.1L2171.5 739.9M2204.0 744.5L2200.4 728.1M2232.3 733.1L2228.9 716.4M2259.8 722.0L2256.8 706.4M2285.8 711.4L2281.7 697.2M1778.2 902.0L1778.7 885.7M1806.4 890.6L1805.0 873.9M1834.8 878.7L1833.5 861.1M1864.5 866.5L1864.6 848.9M1895.0 854.4L1895.1 836.9M1925.6 842.4L1926.6 823.7M2000.3 812.0L2003.2 793.0M2034.7 797.6L2033.6 780.1M2068.9 784.0L2058.9 769.4M2118.0 762.9L2106.5 749.1M2142.5 751.9L2138.8 735.5M2171.5 739.9L2168.5 723.3M2200.4 728.1L2197.2 711.2M2228.9 716.4L2227.4 697.7M2256.8 706.4L2257.4 693.2M1778.7 885.7L1778.9 871.7M1805.0 873.9L1798.0 856.1M1833.5 861.1L1834.7 843.0M1864.6 848.9L1865.7 831.9M1895.1 836.9L1894.1 820.1M1926.6 823.7L1916.6 809.5M1976.1 803.7L1972.6 789.2M2003.2 793.0L2001.8 775.6M2033.6 780.1L2033.7 761.3M2106.5 749.1L2106.5 730.6M2138.8 735.5L2136.7 718.2M2168.5 723.3L2166.0 706.7M2197.2 711.2L2192.2 694.8M1778.9 871.7L1798.0 856.1M1798.0 856.1L1806.5 833.1M1834.7 843.0L1840.7 827.1M1865.7 831.9L1865.6 815.6M1894.1 820.1L1895.6 803.4M1972.6 789.2L1969.5 771.5M2001.8 775.6L1998.2 758.6M2033.7 761.3L2022.4 747.3M2081.0 740.8L2071.0 726.4M2106.5 730.6L2104.6 713.3M2136.7 718.2L2135.4 699.5M2166.0 706.7L2165.6 692.7M1806.5 833.1L1831.6 812.3M1840.7 827.1L1831.6 812.3M1865.6 815.6L1866.8 798.9M1942.0 785.0L1936.3 767.1M1969.5 771.5L1965.5 753.7M1998.2 758.6L1996.0 742.0M2071.0 726.4L2073.6 706.8M2104.6 713.3L2104.2 698.6M1831.6 812.3L1839.5 796.1M1866.8 798.9L1862.6 784.0M1936.3 767.1L1930.7 748.0M1965.5 753.7L1962.2 735.3M1996.0 742.0L1994.9 725.5M2047.0 718.4L2043.5 707.9M1930.7 748.0L1937.9 736.1M1876.8 731.7L1877.2 714.0M1910.8 718.9L1908.5 701.5M1943.5 705.3L1933.9 690.6M1850.4 723.6L1841.2 710.7M1877.2 714.0L1875.7 697.6M1908.5 701.5L1909.9 683.2M1841.2 710.7L1843.2 695.3M1875.7 697.6L1874.2 681.4M1909.9 683.2L1902.6 670.1" fill="none" stroke="#0000ff" stroke-width="2.15" stroke-opacity="0.95"/><path d="M1715.4 1095.7L1744.7 1083.4M1698.5 1083.3L1726.5 1066.5M1665.1 1058.6L1688.7 1042.6M1648.5 1046.4L1665.6 1033.6M1632.0 1034.3L1660.9 1022.4M1660.9 1022.4L1689.7 1010.6M1744.7 1083.4L1773.9 1071.2M1689.7 1010.6L1718.4 998.8M1773.9 1071.2L1803.0 1059.1M1718.4 998.8L1747.0 987.0M1803.0 1059.1L1831.9 1047.0M1747.0 987.0L1775.4 975.3M1831.9 1047.0L1860.8 1034.9M1831.9 1047.0L1798.9 1035.3M1802.8 1001.6L1779.6 1017.3M1820.0 1013.6L1839.4 1024.7M1820.0 1013.6L1839.5 1000.8M1788.0 988.8L1762.5 1001.8M1788.0 988.8L1811.0 977.6M1839.4 1024.7L1860.8 1034.9M1839.4 1024.7L1798.9 1035.3M1839.4 1024.7L1879.5 1006.4M1775.4 975.3L1805.0 963.2M1860.8 1034.9L1887.5 1045.3M1860.8 1034.9L1890.5 1022.5M1764.8 960.4L1803.5 945.0M1887.5 1045.3L1916.4 1054.2M1887.5 1045.3L1910.7 1033.0M1756.9 944.9L1776.8 937.3M1916.4 1054.2L1947.5 1061.6M1916.4 1054.2L1950.3 1047.1M1751.8 928.9L1776.8 937.3M1751.8 928.9L1778.1 919.1M1805.0 963.2L1834.4 951.1M1890.5 1022.5L1920.1 1010.1M1890.5 1022.5L1910.7 1033.0M1947.5 1061.6L1976.9 1051.3M1749.6 912.7L1778.2 902.0M1980.2 1067.4L2007.5 1056.2M1750.1 896.3L1778.7 885.7M1834.4 951.1L1863.7 939.1M1920.1 1010.1L1949.6 997.8M1920.1 1010.1L1960.5 1003.5M2014.5 1071.5L2034.7 1060.7M1753.5 879.8L1778.7 885.7M1753.5 879.8L1778.9 871.7M1863.7 939.1L1892.8 927.1M1949.6 997.8L1978.9 985.6M1949.6 997.8L1960.5 1003.5M1759.5 863.3L1778.9 871.7M1759.5 863.3L1798.0 856.1M1768.2 847.0L1798.0 856.1M1768.2 847.0L1806.5 833.1M1892.8 927.1L1921.8 915.2M1978.9 985.6L2008.1 973.4M2123.2 1073.7L2167.8 1054.8M1921.8 915.2L1950.8 903.3M1921.8 915.2L1961.6 929.2M1921.8 915.2L1893.4 908.6M2008.1 973.4L2037.2 961.2M2160.3 1070.9L2197.2 1066.5M1950.8 903.3L1979.5 891.5M1950.8 903.3L1923.2 896.6M2037.2 961.2L2066.1 949.1M2197.2 1066.5L2233.6 1060.3M2197.2 1066.5L2167.8 1054.8M1809.1 800.1L1831.6 812.3M1809.1 800.1L1839.5 796.1M1979.5 891.5L2008.2 879.7M1979.5 891.5L1954.4 884.6M2066.1 949.1L2095.0 937.1M2233.6 1060.3L2269.2 1052.6M2233.6 1060.3L2205.4 1052.5M1827.4 785.5L1847.7 771.5M2269.2 1052.6L2303.7 1043.3M2269.2 1052.6L2231.3 1043.1M2008.2 879.7L2036.8 867.9M2008.2 879.7L1991.2 871.7M2095.0 937.1L2123.7 925.1M1847.7 771.5L1869.9 758.3M2406.1 1110.6L2432.8 1098.9M2385.4 1097.0L2423.2 1080.8M2364.7 1083.4L2386.9 1074.4M2344.3 1070.0L2384.5 1054.8M2323.9 1056.6L2355.2 1046.0M2303.7 1043.3L2333.0 1033.9M2283.2 1029.8L2311.4 1026.6M2283.2 1029.8L2254.8 1032.9M2262.8 1016.4L2300.9 1010.7M2262.8 1016.4L2227.6 1022.9M2242.5 1003.1L2214.0 1007.6M2222.4 989.9L2264.0 985.3M2222.4 989.9L2186.6 1002.2M2202.4 976.8L2182.7 984.4M2202.4 976.8L2235.1 960.1M2182.5 963.7L2149.1 977.6M2182.5 963.7L2202.7 954.6M2162.8 950.7L2143.6 959.1M2162.8 950.7L2199.7 935.0M2143.2 937.9L2110.2 953.4M2143.2 937.9L2171.1 927.7M2123.7 925.1L2149.7 914.2M2106.1 913.5L2080.8 918.5M2106.1 913.5L2132.6 897.8M2088.6 902.0L2055.3 909.9M2088.6 902.0L2105.6 888.8M2071.2 890.6L2043.0 896.2M2071.2 890.6L2101.7 874.9M2053.9 879.2L2015.1 893.2M2053.9 879.2L2070.5 871.5M2036.8 867.9L2062.6 857.3M2017.7 855.4L1991.2 871.7M2017.7 855.4L2044.1 847.8M1998.8 843.0L2037.4 830.7M1998.8 843.0L1960.4 847.3M1980.1 830.7L2010.5 826.2M1961.4 818.4L2000.3 812.0M1961.4 818.4L1926.6 823.7M1942.9 806.3L1916.6 809.5M1942.9 806.3L1972.6 789.2M1924.5 794.1L1895.6 803.4M1924.5 794.1L1942.0 785.0M1906.2 782.1L1866.8 798.9M1906.2 782.1L1936.3 767.1M1888.0 770.2L1862.6 784.0M1888.0 770.2L1903.9 762.0M1869.9 758.3L1892.5 746.6M1853.2 747.3L1876.8 731.7M1836.6 736.4L1876.8 731.7M1820.1 725.6L1841.2 710.7M1803.7 714.8L1841.2 710.7M1787.4 704.1L1812.6 694.3M2333.0 1033.9L2361.0 1023.5M2333.0 1033.9L2355.2 1046.0M2333.0 1033.9L2311.4 1026.6M1892.5 746.6L1916.6 735.6M2432.8 1098.9L2459.4 1087.1M2149.7 914.2L2175.6 903.4M2062.6 857.3L2088.3 846.8M2062.6 857.3L2044.1 847.8M1812.6 694.3L1837.7 684.4M2361.0 1023.5L2387.4 1012.0M2361.0 1023.5L2336.0 1015.4M1916.6 735.6L1941.9 725.6M2459.4 1087.1L2485.9 1075.5M2175.6 903.4L2201.5 892.6M2175.6 903.4L2197.4 914.0M2088.3 846.8L2113.9 836.2M1837.7 684.4L1862.7 674.7M2485.9 1075.5L2512.2 1063.8M2485.9 1075.5L2454.8 1067.0M2201.5 892.6L2227.2 881.8M2201.5 892.6L2229.1 902.5M2201.5 892.6L2168.1 884.4M2113.9 836.2L2139.4 825.8M2113.9 836.2L2127.2 843.6M1862.7 674.7L1887.6 664.9M2387.4 1012.0L2412.1 999.7M2387.4 1012.0L2407.0 1021.7M1941.9 725.6L1968.4 716.4M1941.9 725.6L1962.2 735.3M2512.2 1063.8L2538.5 1052.3M2512.2 1063.8L2486.8 1052.7M2227.2 881.8L2252.8 871.1M2227.2 881.8L2256.5 894.8M2227.2 881.8L2200.5 869.3M2139.4 825.8L2164.8 815.3M2139.4 825.8L2155.6 831.3M1887.6 664.9L1912.4 655.2M1887.6 664.9L1902.6 670.1M2412.1 999.7L2434.9 986.6M2412.1 999.7L2439.7 1012.0M1968.4 716.4L1995.9 708.2M1968.4 716.4L1994.9 725.5M1968.4 716.4L1943.5 705.3M2517.5 1039.0L2486.8 1052.7M2496.7 1025.7L2453.7 1045.5M2476.0 1012.6L2448.2 1026.4M2434.9 986.6L2458.3 970.9M2414.2 973.4L2373.6 980.2M2393.5 960.3L2361.7 964.8M2393.5 960.3L2415.5 943.4M2373.0 947.3L2333.6 959.3M2352.7 934.4L2331.6 941.8M2352.7 934.4L2384.6 918.5M2332.4 921.6L2298.0 934.9M2332.4 921.6L2352.0 913.2M2312.3 908.8L2293.4 916.7M2312.3 908.8L2348.4 895.4M2292.4 896.2L2261.1 910.1M2292.4 896.2L2321.6 890.3M2272.5 883.6L2256.5 894.8M2272.5 883.6L2309.5 874.1M2252.8 871.1L2280.9 859.4M2252.8 871.1L2284.9 867.2M2235.0 859.8L2200.5 869.3M2235.0 859.8L2250.8 852.2M2217.3 848.6L2189.3 853.2M2217.3 848.6L2240.8 834.3M2199.7 837.4L2164.3 845.4M2199.7 837.4L2217.2 824.7M2182.2 826.3L2155.6 831.3M2182.2 826.3L2217.6 810.1M2164.8 815.3L2192.7 803.8M2145.6 803.1L2128.9 811.2M2145.6 803.1L2183.1 788.6M2126.4 791.0L2097.1 806.9M2126.4 791.0L2147.7 783.5M2107.4 778.9L2144.9 767.6M2107.4 778.9L2068.9 784.0M2088.5 766.9L2118.0 762.9M2069.8 755.0L2106.5 749.1M2069.8 755.0L2033.7 761.3M2051.1 743.2L2022.4 747.3M2032.6 731.4L2071.0 726.4M2032.6 731.4L1996.0 742.0M2014.2 719.8L1994.9 725.5M2014.2 719.8L2043.5 707.9M1995.9 708.2L2025.9 700.5M1979.0 697.4L1943.5 705.3M1962.2 686.8L1933.9 690.6M1945.5 676.2L1909.9 683.2M1928.9 665.7L1902.6 670.1M2025.9 700.5L2056.6 694.1M2025.9 700.5L2043.5 707.9M2280.9 859.4L2308.8 847.7M2280.9 859.4L2250.8 852.2M2192.7 803.8L2220.5 792.4M2192.7 803.8L2217.6 810.1M2458.3 970.9L2427.3 959.4M2056.6 694.1L2087.8 688.8M2308.8 847.7L2336.6 836.1M2308.8 847.7L2340.5 857.1M2308.8 847.7L2278.1 840.5M2220.5 792.4L2248.2 781.0M2087.8 688.8L2119.4 684.8M2496.7 937.5L2455.0 949.3M2336.6 836.1L2364.3 824.5M2336.6 836.1L2369.1 844.1M2336.6 836.1L2311.4 828.1M2248.2 781.0L2275.7 769.7M2364.3 824.5L2391.9 813.0M2364.3 824.5L2397.4 832.3M2364.3 824.5L2336.3 815.2M2275.7 769.7L2303.2 758.4M2522.9 902.3L2485.6 916.6M2391.9 813.0L2419.4 801.5M2391.9 813.0L2426.8 821.8M2391.9 813.0L2428.0 807.4M2391.9 813.0L2364.3 805.0M2303.2 758.4L2330.5 747.2M2182.9 680.5L2165.6 692.7M2214.3 680.2L2192.2 694.8M2419.4 801.5L2446.8 790.1M2419.4 801.5L2395.9 793.0M2330.5 747.2L2357.7 736.0M2538.3 848.8L2507.0 868.5M2538.3 848.8L2514.0 837.5M2446.8 790.1L2474.0 778.7M2446.8 790.1L2420.7 780.0M2357.7 736.0L2384.8 724.9M2275.8 683.6L2257.4 693.2M2537.0 831.4L2514.0 837.5M2537.0 831.4L2510.6 824.2M2305.4 687.2L2281.7 697.2M2532.6 814.4L2510.6 824.2M2474.0 778.7L2501.1 767.3M2474.0 778.7L2449.8 769.4M2384.8 724.9L2411.8 713.8M2384.8 724.9L2352.3 716.4M2334.0 692.0L2309.6 701.3M2525.0 798.0L2507.9 810.5M2361.4 698.1L2387.4 705.4M2361.4 698.1L2334.6 704.6M2514.5 782.3L2486.8 798.2M2387.4 705.4L2411.8 713.8M2387.4 705.4L2352.3 716.4M2501.1 767.3L2527.0 756.5M2411.8 713.8L2433.3 722.7M2411.8 713.8L2437.4 703.3M2487.1 755.0L2449.8 769.4M2433.3 722.7L2453.0 732.6M2433.3 722.7L2407.2 728.6M2433.3 722.7L2463.6 708.5M2471.0 743.4L2450.1 750.7M2471.0 743.4L2489.1 730.2M2453.0 732.6L2419.9 741.8M2527.0 756.5L2552.8 745.8M2527.0 756.5L2499.4 744.4M2437.4 703.3L2462.8 692.8M2552.8 745.8L2578.5 735.0M2552.8 745.8L2523.1 737.1M2462.8 692.8L2488.2 682.4M2578.5 735.0L2604.0 724.4M2578.5 735.0L2550.1 726.3M2488.2 682.4L2513.4 672.0M2604.0 724.4L2629.5 713.7M2604.0 724.4L2578.9 712.4M2513.4 672.0L2538.6 661.7M2629.5 713.7L2611.1 703.2M2611.1 703.2L2592.8 692.7M2611.1 703.2L2578.9 712.4M2592.8 692.7L2574.7 682.3M2592.8 692.7L2568.2 697.4M2574.7 682.3L2556.6 672.0M2574.7 682.3L2547.6 691.4M2556.6 672.0L2538.6 661.7M2556.6 672.0L2519.3 686.3M2423.2 1080.8L2454.8 1067.0M2454.8 1067.0L2486.8 1052.7M2386.9 1074.4L2419.8 1060.5M2419.8 1060.5L2453.7 1045.5M2384.5 1054.8L2416.3 1041.0M2384.5 1054.8L2355.2 1046.0M2416.3 1041.0L2448.2 1026.4M2355.2 1046.0L2384.8 1037.4M2384.8 1037.4L2407.0 1021.7M2407.0 1021.7L2439.7 1012.0M2311.4 1026.6L2336.0 1015.4M2336.0 1015.4L2372.6 1002.1M2372.6 1002.1L2401.5 988.4M2401.5 988.4L2373.6 980.2M2205.4 1052.5L2231.3 1043.1M2231.3 1043.1L2254.8 1032.9M2254.8 1032.9L2227.6 1022.9M2300.9 1010.7L2336.7 995.9M2300.9 1010.7L2274.4 1001.1M2336.7 995.9L2373.6 980.2M2427.3 959.4L2455.0 949.3M2167.8 1054.8L2197.4 1037.8M2197.4 1037.8L2227.6 1022.9M2274.4 1001.1L2301.9 990.2M2301.9 990.2L2334.7 977.0M2334.7 977.0L2361.7 964.8M2415.5 943.4L2453.3 930.3M2415.5 943.4L2388.7 933.4M2453.3 930.3L2485.6 916.6M2100.6 1058.8L2129.6 1048.4M2129.6 1048.4L2161.6 1034.0M2161.6 1034.0L2190.7 1019.9M2190.7 1019.9L2214.0 1007.6M2264.0 985.3L2300.3 971.7M2264.0 985.3L2238.3 975.5M2300.3 971.7L2333.6 959.3M2388.7 933.4L2417.7 923.8M2417.7 923.8L2449.3 911.4M2449.3 911.4L2479.9 898.5M2479.9 898.5L2503.0 886.9M2034.7 1060.7L2066.8 1055.8M2066.8 1055.8L2097.0 1041.4M2066.8 1055.8L2034.6 1046.0M2097.0 1041.4L2127.0 1028.4M2127.0 1028.4L2157.0 1015.0M2157.0 1015.0L2186.6 1002.2M2238.3 975.5L2267.4 965.5M2267.4 965.5L2299.6 953.4M2299.6 953.4L2331.6 941.8M2384.6 918.5L2414.8 905.9M2414.8 905.9L2444.9 893.3M2444.9 893.3L2474.0 880.9M2474.0 880.9L2507.0 868.5M2007.5 1056.2L2034.6 1046.0M2034.6 1046.0L2063.8 1035.0M2063.8 1035.0L2093.3 1022.3M2093.3 1022.3L2123.0 1009.3M2123.0 1009.3L2152.9 996.5M2152.9 996.5L2182.7 984.4M2235.1 960.1L2266.3 947.3M2266.3 947.3L2298.0 934.9M2352.0 913.2L2381.4 900.5M2381.4 900.5L2411.0 887.9M2411.0 887.9L2440.2 875.3M2440.2 875.3L2469.3 862.8M2469.3 862.8L2496.5 849.5M2496.5 849.5L2514.0 837.5M1976.9 1051.3L2003.4 1040.1M2003.4 1040.1L2030.8 1028.5M2030.8 1028.5L2059.4 1016.2M2059.4 1016.2L2088.7 1003.3M2088.7 1003.3L2118.6 990.4M2118.6 990.4L2149.1 977.6M2202.7 954.6L2233.2 941.3M2233.2 941.3L2263.9 928.7M2263.9 928.7L2293.4 916.7M2348.4 895.4L2377.8 882.4M2377.8 882.4L2406.7 869.7M2406.7 869.7L2435.2 857.3M2435.2 857.3L2462.8 845.2M2462.8 845.2L2487.7 833.7M2487.7 833.7L2510.6 824.2M2510.6 824.2L2484.3 817.6M1950.3 1047.1L1971.8 1035.5M1971.8 1035.5L1997.7 1023.1M1997.7 1023.1L2025.0 1010.4M2025.0 1010.4L2053.5 997.5M2053.5 997.5L2083.3 984.3M2083.3 984.3L2113.9 971.5M2113.9 971.5L2143.6 959.1M2199.7 935.0L2230.8 921.9M2199.7 935.0L2171.1 927.7M2230.8 921.9L2261.1 910.1M2230.8 921.9L2197.4 914.0M2261.1 910.1L2229.1 902.5M2321.6 890.3L2345.3 877.2M2345.3 877.2L2373.6 863.6M2373.6 863.6L2402.1 851.1M2402.1 851.1L2430.4 839.4M2430.4 839.4L2457.9 828.1M2457.9 828.1L2484.3 817.6M2484.3 817.6L2507.9 810.5M2484.3 817.6L2455.1 810.5M1938.8 1033.0L1963.3 1018.4M1963.3 1018.4L1990.6 1005.5M1990.6 1005.5L2017.2 991.8M2017.2 991.8L2046.3 978.7M2046.3 978.7L2077.8 964.2M2077.8 964.2L2110.2 953.4M2171.1 927.7L2197.4 914.0M2197.4 914.0L2229.1 902.5M2229.1 902.5L2256.5 894.8M2309.5 874.1L2340.5 857.1M2309.5 874.1L2284.9 867.2M2340.5 857.1L2369.1 844.1M2369.1 844.1L2397.4 832.3M2397.4 832.3L2426.8 821.8M2426.8 821.8L2455.1 810.5M2455.1 810.5L2486.8 798.2M1726.5 1066.5L1763.7 1052.2M1726.5 1066.5L1697.4 1057.2M1763.7 1052.2L1798.9 1035.3M1879.5 1006.4L1912.4 992.7M1912.4 992.7L1942.8 979.8M1942.8 979.8L1972.5 967.1M1972.5 967.1L2001.9 954.8M2001.9 954.8L2030.9 942.7M2030.9 942.7L2058.9 930.2M2058.9 930.2L2080.8 918.5M2080.8 918.5L2055.3 909.9M2132.6 897.8L2168.1 884.4M2132.6 897.8L2105.6 888.8M2168.1 884.4L2200.5 869.3M2250.8 852.2L2278.1 840.5M2278.1 840.5L2311.4 828.1M2311.4 828.1L2336.3 815.2M2336.3 815.2L2364.3 805.0M2364.3 805.0L2395.9 793.0M2395.9 793.0L2420.7 780.0M2420.7 780.0L2449.8 769.4M2449.8 769.4L2420.2 762.1M2499.4 744.4L2523.1 737.1M2523.1 737.1L2550.1 726.3M2550.1 726.3L2578.9 712.4M1697.4 1057.2L1725.3 1047.5M1725.3 1047.5L1754.6 1033.8M1754.6 1033.8L1779.6 1017.3M1839.5 1000.8L1875.5 987.7M1839.5 1000.8L1816.7 990.1M1875.5 987.7L1906.9 974.6M1906.9 974.6L1936.9 961.2M1936.9 961.2L1966.6 948.3M1966.6 948.3L1996.3 936.4M1996.3 936.4L2025.4 924.4M2025.4 924.4L2055.3 909.9M2105.6 888.8L2134.0 878.7M2134.0 878.7L2164.6 865.3M2164.6 865.3L2189.3 853.2M2189.3 853.2L2164.3 845.4M2240.8 834.3L2276.4 821.9M2240.8 834.3L2217.2 824.7M2276.4 821.9L2306.5 809.8M2306.5 809.8L2334.7 798.2M2334.7 798.2L2363.4 786.6M2363.4 786.6L2391.7 774.5M2391.7 774.5L2420.2 762.1M2420.2 762.1L2450.1 750.7M2450.1 750.7L2419.9 741.8M2489.1 730.2L2520.1 719.6M2489.1 730.2L2466.1 721.4M2520.1 719.6L2547.3 708.3M2547.3 708.3L2568.2 697.4M2568.2 697.4L2547.6 691.4M1688.7 1042.6L1721.0 1032.8M1688.7 1042.6L1665.6 1033.6M1721.0 1032.8L1697.6 1022.6M1739.0 1017.8L1697.6 1022.6M1739.0 1017.8L1762.5 1001.8M1816.7 990.1L1842.3 982.0M1842.3 982.0L1872.2 970.0M1872.2 970.0L1901.8 956.5M1901.8 956.5L1930.8 941.4M1930.8 941.4L1961.6 929.2M1961.6 929.2L1991.9 919.5M1991.9 919.5L2019.5 908.0M2019.5 908.0L2043.0 896.2M2101.7 874.9L2131.5 861.1M2131.5 861.1L2164.3 845.4M2217.2 824.7L2245.9 815.5M2245.9 815.5L2276.1 804.0M2276.1 804.0L2305.0 792.3M2305.0 792.3L2333.3 780.7M2333.3 780.7L2361.4 768.9M2361.4 768.9L2389.7 756.5M2389.7 756.5L2419.9 741.8M2466.1 721.4L2491.5 713.3M2491.5 713.3L2519.4 702.7M2519.4 702.7L2547.6 691.4M1665.6 1033.6L1697.6 1022.6M1811.0 977.6L1838.8 966.2M1838.8 966.2L1867.9 953.6M1867.9 953.6L1896.5 938.7M1962.5 914.4L1986.5 905.0M1986.5 905.0L2015.1 893.2M2070.5 871.5L2097.0 859.2M2097.0 859.2L2127.2 843.6M2127.2 843.6L2155.6 831.3M2217.6 810.1L2247.4 798.2M2247.4 798.2L2276.0 786.7M2276.0 786.7L2304.1 775.2M2304.1 775.2L2331.9 763.7M2331.9 763.7L2359.5 752.0M2359.5 752.0L2386.4 739.9M2386.4 739.9L2407.2 728.6M2463.6 708.5L2490.8 697.6M2490.8 697.6L2519.3 686.3M1803.5 945.0L1834.4 932.6M1803.5 945.0L1776.8 937.3M1834.4 932.6L1864.0 920.5M1834.4 932.6L1805.8 925.9M1864.0 920.5L1893.4 908.6M1893.4 908.6L1923.2 896.6M1923.2 896.6L1954.4 884.6M1954.4 884.6L1991.2 871.7M2044.1 847.8L2067.5 834.0M2067.5 834.0L2100.4 825.6M2100.4 825.6L2128.9 811.2M2183.1 788.6L2213.5 776.6M2213.5 776.6L2242.0 765.2M2242.0 765.2L2269.8 753.8M2269.8 753.8L2297.1 742.4M2297.1 742.4L2324.1 730.6M2324.1 730.6L2352.3 716.4M1776.8 937.3L1805.8 925.9M1805.8 925.9L1835.1 914.1M1805.8 925.9L1778.1 919.1M1835.1 914.1L1864.4 902.2M1864.4 902.2L1894.2 890.3M1894.2 890.3L1924.9 878.3M1924.9 878.3L1957.0 866.4M1957.0 866.4L1985.0 856.7M1985.0 856.7L1960.4 847.3M2037.4 830.7L2067.4 819.0M2067.4 819.0L2097.1 806.9M2147.7 783.5L2178.7 772.2M2178.7 772.2L2208.3 760.6M2208.3 760.6L2236.7 749.2M2236.7 749.2L2264.4 737.9M2264.4 737.9L2291.1 726.6M2291.1 726.6L2316.2 715.2M2316.2 715.2L2334.6 704.6M1778.1 919.1L1806.5 907.9M1806.5 907.9L1835.3 896.2M1835.3 896.2L1864.6 884.2M1864.6 884.2L1894.8 872.2M1894.8 872.2L1926.2 860.1M1926.2 860.1L1960.4 847.3M2010.5 826.2L2036.1 814.6M2036.1 814.6L2066.2 802.4M2066.2 802.4L2093.2 792.6M2093.2 792.6L2068.9 784.0M2144.9 767.6L2175.0 756.1M2175.0 756.1L2204.0 744.5M2204.0 744.5L2232.3 733.1M2232.3 733.1L2259.8 722.0M2259.8 722.0L2285.8 711.4M2285.8 711.4L2309.6 701.3M1778.2 902.0L1806.4 890.6M1806.4 890.6L1834.8 878.7M1834.8 878.7L1864.5 866.5M1864.5 866.5L1895.0 854.4M1895.0 854.4L1925.6 842.4M1925.6 842.4L1950.8 832.5M1950.8 832.5L1926.6 823.7M2000.3 812.0L2034.7 797.6M2000.3 812.0L1976.1 803.7M2034.7 797.6L2068.9 784.0M2118.0 762.9L2142.5 751.9M2142.5 751.9L2171.5 739.9M2171.5 739.9L2200.4 728.1M2200.4 728.1L2228.9 716.4M2228.9 716.4L2256.8 706.4M2256.8 706.4L2281.7 697.2M2256.8 706.4L2227.4 697.7M1778.7 885.7L1805.0 873.9M1805.0 873.9L1833.5 861.1M1833.5 861.1L1864.6 848.9M1864.6 848.9L1895.1 836.9M1895.1 836.9L1926.6 823.7M1976.1 803.7L2003.2 793.0M2003.2 793.0L2033.6 780.1M2033.6 780.1L2058.9 769.4M2058.9 769.4L2033.7 761.3M2106.5 749.1L2138.8 735.5M2106.5 749.1L2081.0 740.8M2138.8 735.5L2168.5 723.3M2168.5 723.3L2197.2 711.2M2197.2 711.2L2227.4 697.7M2227.4 697.7L2257.4 693.2M1798.0 856.1L1834.7 843.0M1834.7 843.0L1865.7 831.9M1834.7 843.0L1806.5 833.1M1865.7 831.9L1894.1 820.1M1894.1 820.1L1916.6 809.5M1916.6 809.5L1895.6 803.4M1972.6 789.2L2001.8 775.6M2001.8 775.6L2033.7 761.3M2081.0 740.8L2106.5 730.6M2106.5 730.6L2136.7 718.2M2136.7 718.2L2166.0 706.7M2166.0 706.7L2192.2 694.8M2166.0 706.7L2135.4 699.5M1806.5 833.1L1840.7 827.1M1840.7 827.1L1865.6 815.6M1865.6 815.6L1895.6 803.4M1942.0 785.0L1969.5 771.5M1969.5 771.5L1998.2 758.6M1998.2 758.6L2022.4 747.3M2071.0 726.4L2104.6 713.3M2071.0 726.4L2047.0 718.4M2104.6 713.3L2135.4 699.5M2135.4 699.5L2165.6 692.7M1831.6 812.3L1866.8 798.9M1936.3 767.1L1965.5 753.7M1965.5 753.7L1996.0 742.0M2047.0 718.4L2073.6 706.8M2073.6 706.8L2104.2 698.6M1839.5 796.1L1862.6 784.0M1903.9 762.0L1930.7 748.0M1930.7 748.0L1962.2 735.3M1962.2 735.3L1994.9 725.5M1876.8 731.7L1910.8 718.9M1876.8 731.7L1850.4 723.6M1910.8 718.9L1943.5 705.3M1850.4 723.6L1877.2 714.0M1877.2 714.0L1908.5 701.5M1908.5 701.5L1933.9 690.6M1933.9 690.6L1909.9 683.2M1841.2 710.7L1875.7 697.6M1841.2 710.7L1817.6 703.8M1875.7 697.6L1909.9 683.2M1817.6 703.8L1843.2 695.3M1843.2 695.3L1874.2 681.4M1874.2 681.4L1902.6 670.1" fill="none" stroke="#0000ff" stroke-width="2.2" stroke-dasharray="7.5 2.4" stroke-opacity="0.95"/><path d="M1698.5 1083.3L1744.7 1083.4M1681.7 1070.9L1726.5 1066.5M1665.1 1058.6L1697.4 1057.2M1648.5 1046.4L1688.7 1042.6M1632.0 1034.3L1665.6 1033.6M1660.9 1022.4L1697.6 1022.6M1773.9 1071.2L1726.5 1066.5M1718.4 998.8L1762.5 1001.8M1803.0 1059.1L1763.7 1052.2M1747.0 987.0L1788.0 988.8M1802.8 1001.6L1839.5 1000.8M1802.8 1001.6L1762.5 1001.8M1820.0 1013.6L1779.6 1017.3M1788.0 988.8L1816.7 990.1M1839.4 1024.7L1890.5 1022.5M1775.4 975.3L1811.0 977.6M1764.8 960.4L1805.0 963.2M1805.0 963.2L1838.8 966.2M1947.5 1061.6L1980.2 1067.4M1749.6 912.7L1778.1 919.1M1980.2 1067.4L2014.5 1071.5M1750.1 896.3L1778.2 902.0M1834.4 951.1L1867.9 953.6M1834.4 951.1L1803.5 945.0M1920.1 1010.1L1963.3 1018.4M1920.1 1010.1L1879.5 1006.4M2014.5 1071.5L2050.0 1074.0M2050.0 1074.0L2086.3 1074.7M1863.7 939.1L1896.5 938.7M1863.7 939.1L1834.4 932.6M1949.6 997.8L1912.4 992.7M2086.3 1074.7L2123.2 1073.7M1892.8 927.1L1864.0 920.5M1978.9 985.6L2017.2 991.8M1978.9 985.6L1942.8 979.8M2123.2 1073.7L2160.3 1070.9M1779.4 831.0L1806.5 833.1M1921.8 915.2L1962.5 914.4M2008.1 973.4L2046.3 978.7M2008.1 973.4L1972.5 967.1M1793.1 815.3L1831.6 812.3M1950.8 903.3L1986.5 905.0M2037.2 961.2L2077.8 964.2M2037.2 961.2L2001.9 954.8M1979.5 891.5L2015.1 893.2M2066.1 949.1L2087.3 950.9M2066.1 949.1L2030.9 942.7M1827.4 785.5L1862.6 784.0M2008.2 879.7L2053.9 879.2M2095.0 937.1L2143.2 937.9M2095.0 937.1L2058.9 930.2M1847.7 771.5L1888.0 770.2M2385.4 1097.0L2432.8 1098.9M2344.3 1070.0L2386.9 1074.4M2242.5 1003.1L2274.4 1001.1M2222.4 989.9L2182.7 984.4M2202.4 976.8L2238.3 975.5M2182.5 963.7L2143.6 959.1M2162.8 950.7L2202.7 954.6M2106.1 913.5L2149.7 914.2M2088.6 902.0L2132.6 897.8M2071.2 890.6L2105.6 888.8M2036.8 867.9L2070.5 871.5M2036.8 867.9L1991.2 871.7M2017.7 855.4L1985.0 856.7M1998.8 843.0L2044.1 847.8M1980.1 830.7L1950.8 832.5M1942.9 806.3L1976.1 803.7M1906.2 782.1L1942.0 785.0M1906.2 782.1L1862.6 784.0M1869.9 758.3L1903.9 762.0M1853.2 747.3L1892.5 746.6M1820.1 725.6L1850.4 723.6M1787.4 704.1L1817.6 703.8M1892.5 746.6L1930.7 748.0M2149.7 914.2L2173.5 914.8M2062.6 857.3L2097.0 859.2M1812.6 694.3L1843.2 695.3M2361.0 1023.5L2407.0 1021.7M1916.6 735.6L1937.9 736.1M1916.6 735.6L1876.8 731.7M2459.4 1087.1L2423.2 1080.8M2175.6 903.4L2132.6 897.8M2088.3 846.8L2127.2 843.6M2088.3 846.8L2044.1 847.8M1837.7 684.4L1874.2 681.4M1941.9 725.6L1910.8 718.9M2227.2 881.8L2272.5 883.6M2139.4 825.8L2100.4 825.6M2412.1 999.7L2455.4 999.6M2412.1 999.7L2372.6 1002.1M2496.7 1025.7L2448.2 1026.4M2476.0 1012.6L2439.7 1012.0M2434.9 986.6L2401.5 988.4M2414.2 973.4L2458.3 970.9M2393.5 960.3L2427.3 959.4M2373.0 947.3L2415.5 943.4M2373.0 947.3L2331.6 941.8M2352.7 934.4L2388.7 933.4M2332.4 921.6L2293.4 916.7M2312.3 908.8L2352.0 913.2M2292.4 896.2L2256.5 894.8M2217.3 848.6L2250.8 852.2M2199.7 837.4L2240.8 834.3M2182.2 826.3L2217.2 824.7M2164.8 815.3L2128.9 811.2M2145.6 803.1L2192.7 803.8M2126.4 791.0L2093.2 792.6M2107.4 778.9L2147.7 783.5M2088.5 766.9L2058.9 769.4M2051.1 743.2L2081.0 740.8M2032.6 731.4L1994.9 725.5M2014.2 719.8L2047.0 718.4M2479.0 954.5L2455.0 949.3M2220.5 792.4L2247.4 798.2M2220.5 792.4L2183.1 788.6M2496.7 937.5L2453.3 930.3M2248.2 781.0L2276.0 786.7M2248.2 781.0L2213.5 776.6M2119.4 684.8L2151.2 682.0M2511.3 920.0L2485.6 916.6M2364.3 824.5L2337.1 825.9M2275.7 769.7L2304.1 775.2M2275.7 769.7L2242.0 765.2M2151.2 682.0L2182.9 680.5M2522.9 902.3L2479.9 898.5M2303.2 758.4L2331.9 763.7M2303.2 758.4L2269.8 753.8M2182.9 680.5L2214.3 680.2M2531.3 884.4L2503.0 886.9M2214.3 680.2L2245.4 681.3M2330.5 747.2L2359.5 752.0M2330.5 747.2L2297.1 742.4M2536.4 866.5L2507.0 868.5M2245.4 681.3L2275.8 683.6M2538.3 848.8L2496.5 849.5M2446.8 790.1L2486.8 798.2M2446.8 790.1L2420.6 791.1M2357.7 736.0L2386.4 739.9M2357.7 736.0L2324.1 730.6M2275.8 683.6L2305.4 687.2M2305.4 687.2L2334.0 692.0M2532.6 814.4L2507.9 810.5M2474.0 778.7L2514.5 782.3M2384.8 724.9L2407.2 728.6M2334.0 692.0L2361.4 698.1M2525.0 798.0L2486.8 798.2M2487.1 755.0L2527.0 756.5M2487.1 755.0L2450.1 750.7M2433.3 722.7L2466.1 721.4M2471.0 743.4L2499.4 744.4M2453.0 732.6L2489.1 730.2M2437.4 703.3L2463.6 708.5M2462.8 692.8L2490.8 697.6M2488.2 682.4L2519.3 686.3M2513.4 672.0L2556.6 672.0M2423.2 1080.8L2386.9 1074.4M2454.8 1067.0L2419.8 1060.5M2486.8 1052.7L2453.7 1045.5M2419.8 1060.5L2384.5 1054.8M2453.7 1045.5L2416.3 1041.0M2416.3 1041.0L2384.8 1037.4M2448.2 1026.4L2407.0 1021.7M2336.0 1015.4L2300.9 1010.7M2372.6 1002.1L2336.7 995.9M2205.4 1052.5L2167.8 1054.8M2231.3 1043.1L2197.4 1037.8M2336.7 995.9L2301.9 990.2M2373.6 980.2L2334.7 977.0M2455.0 949.3L2415.5 943.4M2167.8 1054.8L2129.6 1048.4M2197.4 1037.8L2161.6 1034.0M2227.6 1022.9L2190.7 1019.9M2301.9 990.2L2264.0 985.3M2334.7 977.0L2300.3 971.7M2361.7 964.8L2333.6 959.3M2453.3 930.3L2417.7 923.8M2485.6 916.6L2449.3 911.4M2100.6 1058.8L2066.8 1055.8M2129.6 1048.4L2097.0 1041.4M2161.6 1034.0L2127.0 1028.4M2190.7 1019.9L2157.0 1015.0M2214.0 1007.6L2186.6 1002.2M2300.3 971.7L2267.4 965.5M2333.6 959.3L2299.6 953.4M2417.7 923.8L2384.6 918.5M2449.3 911.4L2414.8 905.9M2479.9 898.5L2444.9 893.3M2503.0 886.9L2474.0 880.9M2034.7 1060.7L2007.5 1056.2M2097.0 1041.4L2063.8 1035.0M2127.0 1028.4L2093.3 1022.3M2157.0 1015.0L2123.0 1009.3M2186.6 1002.2L2152.9 996.5M2267.4 965.5L2235.1 960.1M2299.6 953.4L2266.3 947.3M2331.6 941.8L2298.0 934.9M2384.6 918.5L2352.0 913.2M2414.8 905.9L2381.4 900.5M2444.9 893.3L2411.0 887.9M2474.0 880.9L2440.2 875.3M2507.0 868.5L2469.3 862.8M2007.5 1056.2L1976.9 1051.3M2034.6 1046.0L2003.4 1040.1M2063.8 1035.0L2030.8 1028.5M2093.3 1022.3L2059.4 1016.2M2123.0 1009.3L2088.7 1003.3M2152.9 996.5L2118.6 990.4M2182.7 984.4L2149.1 977.6M2235.1 960.1L2202.7 954.6M2266.3 947.3L2233.2 941.3M2298.0 934.9L2263.9 928.7M2381.4 900.5L2348.4 895.4M2411.0 887.9L2377.8 882.4M2440.2 875.3L2406.7 869.7M2469.3 862.8L2435.2 857.3M2496.5 849.5L2462.8 845.2M2514.0 837.5L2487.7 833.7M1976.9 1051.3L1950.3 1047.1M2003.4 1040.1L1971.8 1035.5M2030.8 1028.5L1997.7 1023.1M2059.4 1016.2L2025.0 1010.4M2088.7 1003.3L2053.5 997.5M2118.6 990.4L2083.3 984.3M2149.1 977.6L2113.9 971.5M2233.2 941.3L2199.7 935.0M2263.9 928.7L2230.8 921.9M2293.4 916.7L2261.1 910.1M2348.4 895.4L2321.6 890.3M2377.8 882.4L2345.3 877.2M2406.7 869.7L2373.6 863.6M2435.2 857.3L2402.1 851.1M2462.8 845.2L2430.4 839.4M2487.7 833.7L2457.9 828.1M1971.8 1035.5L1938.8 1033.0M1997.7 1023.1L1963.3 1018.4M2025.0 1010.4L1990.6 1005.5M2053.5 997.5L2017.2 991.8M2083.3 984.3L2046.3 978.7M2113.9 971.5L2077.8 964.2M2143.6 959.1L2110.2 953.4M2345.3 877.2L2309.5 874.1M2373.6 863.6L2340.5 857.1M2402.1 851.1L2369.1 844.1M2430.4 839.4L2397.4 832.3M2457.9 828.1L2426.8 821.8M1938.8 1033.0L1910.7 1033.0M1990.6 1005.5L1960.5 1003.5M2110.2 953.4L2087.3 950.9M2197.4 914.0L2173.5 914.8M2455.1 810.5L2428.0 807.4M2337.1 825.9L2311.4 828.1M2420.6 791.1L2395.9 793.0M1763.7 1052.2L1725.3 1047.5M1798.9 1035.3L1754.6 1033.8M1879.5 1006.4L1839.5 1000.8M1912.4 992.7L1875.5 987.7M1942.8 979.8L1906.9 974.6M1972.5 967.1L1936.9 961.2M2001.9 954.8L1966.6 948.3M2030.9 942.7L1996.3 936.4M2058.9 930.2L2025.4 924.4M2168.1 884.4L2134.0 878.7M2200.5 869.3L2164.6 865.3M2278.1 840.5L2240.8 834.3M2311.4 828.1L2276.4 821.9M2336.3 815.2L2306.5 809.8M2364.3 805.0L2334.7 798.2M2395.9 793.0L2363.4 786.6M2420.7 780.0L2391.7 774.5M2523.1 737.1L2489.1 730.2M2550.1 726.3L2520.1 719.6M2578.9 712.4L2547.3 708.3M1725.3 1047.5L1688.7 1042.6M1754.6 1033.8L1721.0 1032.8M1779.6 1017.3L1739.0 1017.8M1875.5 987.7L1842.3 982.0M1906.9 974.6L1872.2 970.0M1936.9 961.2L1901.8 956.5M1966.6 948.3L1930.8 941.4M1996.3 936.4L1961.6 929.2M2025.4 924.4L1991.9 919.5M2055.3 909.9L2019.5 908.0M2134.0 878.7L2101.7 874.9M2164.6 865.3L2131.5 861.1M2276.4 821.9L2245.9 815.5M2306.5 809.8L2276.1 804.0M2334.7 798.2L2305.0 792.3M2363.4 786.6L2333.3 780.7M2391.7 774.5L2361.4 768.9M2420.2 762.1L2389.7 756.5M2520.1 719.6L2491.5 713.3M2547.3 708.3L2519.4 702.7M1842.3 982.0L1811.0 977.6M1872.2 970.0L1838.8 966.2M1901.8 956.5L1867.9 953.6M1930.8 941.4L1896.5 938.7M1991.9 919.5L1962.5 914.4M2019.5 908.0L1986.5 905.0M2043.0 896.2L2015.1 893.2M2101.7 874.9L2070.5 871.5M2131.5 861.1L2097.0 859.2M2164.3 845.4L2127.2 843.6M2245.9 815.5L2217.6 810.1M2276.1 804.0L2247.4 798.2M2305.0 792.3L2276.0 786.7M2333.3 780.7L2304.1 775.2M2361.4 768.9L2331.9 763.7M2389.7 756.5L2359.5 752.0M2419.9 741.8L2386.4 739.9M2491.5 713.3L2463.6 708.5M2519.4 702.7L2490.8 697.6M2547.6 691.4L2519.3 686.3M1864.0 920.5L1835.1 914.1M1893.4 908.6L1864.4 902.2M1923.2 896.6L1894.2 890.3M1954.4 884.6L1924.9 878.3M1991.2 871.7L1957.0 866.4M2067.5 834.0L2037.4 830.7M2100.4 825.6L2067.4 819.0M2128.9 811.2L2097.1 806.9M2183.1 788.6L2147.7 783.5M2213.5 776.6L2178.7 772.2M2242.0 765.2L2208.3 760.6M2269.8 753.8L2236.7 749.2M2297.1 742.4L2264.4 737.9M2324.1 730.6L2291.1 726.6M2352.3 716.4L2316.2 715.2M1835.1 914.1L1806.5 907.9M1864.4 902.2L1835.3 896.2M1894.2 890.3L1864.6 884.2M1924.9 878.3L1894.8 872.2M1957.0 866.4L1926.2 860.1M2037.4 830.7L2010.5 826.2M2067.4 819.0L2036.1 814.6M2097.1 806.9L2066.2 802.4M2178.7 772.2L2144.9 767.6M2208.3 760.6L2175.0 756.1M2236.7 749.2L2204.0 744.5M2264.4 737.9L2232.3 733.1M2291.1 726.6L2259.8 722.0M2316.2 715.2L2285.8 711.4M2334.6 704.6L2309.6 701.3M1806.5 907.9L1778.2 902.0M1835.3 896.2L1806.4 890.6M1864.6 884.2L1834.8 878.7M1894.8 872.2L1864.5 866.5M1926.2 860.1L1895.0 854.4M1960.4 847.3L1925.6 842.4M2036.1 814.6L2000.3 812.0M2066.2 802.4L2034.7 797.6M2144.9 767.6L2118.0 762.9M2175.0 756.1L2142.5 751.9M2204.0 744.5L2171.5 739.9M2232.3 733.1L2200.4 728.1M2259.8 722.0L2228.9 716.4M2285.8 711.4L2256.8 706.4M2309.6 701.3L2281.7 697.2M1806.4 890.6L1778.7 885.7M1834.8 878.7L1805.0 873.9M1864.5 866.5L1833.5 861.1M1895.0 854.4L1864.6 848.9M1925.6 842.4L1895.1 836.9M2034.7 797.6L2003.2 793.0M2068.9 784.0L2033.6 780.1M2142.5 751.9L2106.5 749.1M2171.5 739.9L2138.8 735.5M2200.4 728.1L2168.5 723.3M2228.9 716.4L2197.2 711.2M2281.7 697.2L2257.4 693.2M1805.0 873.9L1778.9 871.7M1833.5 861.1L1798.0 856.1M1864.6 848.9L1834.7 843.0M1895.1 836.9L1865.7 831.9M1926.6 823.7L1894.1 820.1M2003.2 793.0L1972.6 789.2M2033.6 780.1L2001.8 775.6M2138.8 735.5L2106.5 730.6M2168.5 723.3L2136.7 718.2M2197.2 711.2L2166.0 706.7M2227.4 697.7L2192.2 694.8M1865.7 831.9L1840.7 827.1M1894.1 820.1L1865.6 815.6M1972.6 789.2L1942.0 785.0M2001.8 775.6L1969.5 771.5M2033.7 761.3L1998.2 758.6M2106.5 730.6L2071.0 726.4M2136.7 718.2L2104.6 713.3M2192.2 694.8L2165.6 692.7M1865.6 815.6L1831.6 812.3M1895.6 803.4L1866.8 798.9M1969.5 771.5L1936.3 767.1M1998.2 758.6L1965.5 753.7M2022.4 747.3L1996.0 742.0M2104.6 713.3L2073.6 706.8M2135.4 699.5L2104.2 698.6M1866.8 798.9L1839.5 796.1M1936.3 767.1L1903.9 762.0M1965.5 753.7L1930.7 748.0M1996.0 742.0L1962.2 735.3M2073.6 706.8L2043.5 707.9M1962.2 735.3L1937.9 736.1M1910.8 718.9L1877.2 714.0M1943.5 705.3L1908.5 701.5M1877.2 714.0L1841.2 710.7M1908.5 701.5L1875.7 697.6M1875.7 697.6L1843.2 695.3M1909.9 683.2L1874.2 681.4" fill="none" stroke="#0000ff" stroke-width="2.6" stroke-opacity="0.75" stroke-dasharray="14 2.2"/><path d="M2406.1 1110.6L2538.5 1052.3L1912.4 655.2L1787.4 704.1ZM1715.4 1095.7L2629.5 713.7L2538.6 661.7L1632.0 1034.3ZM2461.1 737.2L2452.9 732.6L2444.4 728.1L2435.6 723.8L2426.4 719.7L2416.9 715.8L2407.2 712.0L2397.1 708.5L2386.7 705.2L2376.1 702.0L2365.2 699.1L2354.1 696.4L2342.8 693.8L2331.2 691.5L2319.5 689.4L2307.5 687.5L2295.4 685.8L2283.1 684.4L2270.7 683.1L2258.1 682.1L2245.4 681.3L2232.6 680.7L2219.7 680.3L2206.7 680.2L2193.7 680.3L2180.6 680.6L2167.5 681.1L2154.3 681.8L2141.1 682.8L2128.0 683.9L2114.8 685.3L2101.7 686.9L2088.6 688.7L2075.6 690.7L2062.7 693.0L2049.8 695.4L2037.1 698.0L2024.4 700.9L2011.9 703.9L1999.6 707.2L1987.4 710.6L1975.3 714.2L1963.5 718.0L1951.8 722.0L1940.3 726.2L1929.1 730.5L1918.1 735.0L1907.3 739.7L1896.9 744.5L1886.6 749.5L1876.7 754.6L1867.0 759.9L1857.7 765.3L1848.7 770.9L1840.0 776.6L1831.6 782.4L1823.6 788.3L1816.0 794.4L1808.7 800.5L1801.8 806.7L1795.3 813.1L1789.2 819.5L1783.5 826.0L1778.2 832.5L1773.3 839.2L1768.9 845.8L1764.9 852.6L1761.4 859.3L1758.3 866.1L1755.6 872.9L1753.5 879.8L1751.8 886.6L1750.5 893.4L1749.8 900.3L1749.5 907.1L1749.7 913.9L1750.3 920.6L1751.5 927.4L1753.1 934.0L1755.3 940.6L1757.9 947.2L1761.0 953.6L1764.5 960.0L1768.6 966.3L1773.1 972.4L1778.1 978.5L1783.6 984.5L1789.5 990.3L1795.9 996.0L1802.8 1001.5L1810.1 1006.9L1817.8 1012.2L1825.9 1017.2L1834.5 1022.1L1843.5 1026.8L1852.9 1031.4L1862.6 1035.7L1872.8 1039.8L1883.3 1043.8L1894.1 1047.5L1905.3 1051.0L1916.8 1054.3L1928.6 1057.3L1940.8 1060.1L1953.2 1062.7L1965.8 1065.0L1978.7 1067.1L1991.8 1069.0L2005.2 1070.6L2018.7 1071.9L2032.4 1073.0L2046.2 1073.8L2060.2 1074.3L2074.3 1074.6L2088.5 1074.7L2102.8 1074.4L2117.2 1073.9L2131.5 1073.2L2145.9 1072.2L2160.3 1070.9L2174.7 1069.4L2189.0 1067.6L2203.3 1065.6L2217.5 1063.3L2231.5 1060.7L2245.5 1057.9L2259.3 1054.9L2273.0 1051.7L2286.5 1048.2L2299.7 1044.5L2312.8 1040.6L2325.7 1036.4L2338.3 1032.1L2350.6 1027.5L2362.6 1022.8L2374.4 1017.9L2385.8 1012.8L2396.9 1007.5L2407.7 1002.0L2418.1 996.4L2428.2 990.7L2437.8 984.8L2447.1 978.8L2456.0 972.6L2464.4 966.4L2472.5 960.0L2480.1 953.5L2487.2 947.0L2493.9 940.3L2500.2 933.6L2506.0 926.9L2511.3 920.0L2516.2 913.2L2520.6 906.3L2524.5 899.3L2527.9 892.4L2530.8 885.4L2533.3 878.5L2535.3 871.6L2536.8 864.6L2537.7 857.7L2538.3 850.9L2538.3 844.0L2537.8 837.3L2536.9 830.6L2535.5 823.9L2533.6 817.4L2531.2 810.9L2528.4 804.5L2525.2 798.2L2521.4 792.0L2517.3 785.9L2512.7 779.9L2507.7 774.1L2502.2 768.4L2496.3 762.8L2490.1 757.4L2483.4 752.1L2476.3 747.0L2468.9 742.0Z" fill="none" stroke="#0000ff" stroke-width="4.8" stroke-linejoin="round"/><path d="M1327 1460.4L1323.9 1412" stroke="#0000ff" stroke-width="3.6" fill="none"/><path d="M1323.3 1400.5L1317.6 1418L1329.3 1417.6Z" fill="#0000ff"/><path d="M1327 1460.4L1360 1446.5" stroke="#ff0000" stroke-width="3.4" fill="none"/><path d="M1372 1440.6L1355.4 1441.6L1360.6 1452.6Z" fill="#ff0000"/><path d="M1327 1460.4L1306 1447.2" stroke="#00ff00" stroke-width="3.4" fill="none"/><path d="M1297 1440.6L1310.6 1441.4L1304.6 1452Z" fill="#00ff00"/><g fill="#dff0fa" fill-opacity="0.85" font-family="Liberation Sans, sans-serif"><text x="2892.6" y="336" font-size="20.5" textLength="16" lengthAdjust="spacingAndGlyphs">C</text><text x="2910" y="336" font-size="16.5" textLength="74" lengthAdjust="spacingAndGlyphs">OMSOL</text><text x="2828.9" y="356.7" font-size="20.5" textLength="20" lengthAdjust="spacingAndGlyphs">M</text><text x="2850.5" y="356.7" font-size="16.5" textLength="133.5" lengthAdjust="spacingAndGlyphs">ULTIPHYSICS</text><circle cx="2990.3" cy="347" r="1.6"/></g><g><path d="M2996 326L3023 320.5L3031 340L3016 360.5L2999 352Z" fill="#d6ebf7" fill-opacity="0.9"/><path d="M2996 326L3009 331L3016 360.5L2999 352Z" fill="#a9d2ec"/><path d="M3009 331L3023 320.5L3031 340L3016 360.5Z" fill="#cfe7f5"/><path d="M2999 331C3004 336,3006 346,3003 351C2999 345,2998 338,2999 331Z" fill="#3f8fc8" fill-opacity="0.75"/><path d="M3013 334C3019 330,3026 336,3026 344C3024 350,3019 352,3016 349C3020 345,3019 338,3013 334Z" fill="#2f86c4" fill-opacity="0.8"/></g></svg>
<div class="a" style="left:1245px;top:1574px;width:1824px;height:432px;border:2px solid #d8d9de;background:#fafbfe"></div>
<div class="a" style="left:1247px;top:1637px;width:1820px;height:2px;background:#d8d9de"></div>
<div class="a" style="left:1254.3px;top:1588.6px;width:58.3px;height:48.4px;background:#ececec"></div>
<div class="a" style="left:1320.4px;top:1588.6px;width:103.5px;height:48.4px;background:#ececec"></div>
<div class="a" style="left:1596.9px;top:1588.6px;width:112.9px;height:48.4px;background:#ececec"></div>
<div class="a" style="left:1431.5px;top:1589px;width:158.5px;height:50px;border:2px solid #d8d9de;border-bottom:none;background:#fafbfe"></div>
<svg class="a" style="left:1397.6px;top:1609.2px" width="16" height="16" viewBox="0 0 16 16"><path d="M1 1L15 15M15 1L1 15" stroke="#757575" stroke-width="2.4" fill="none"/></svg>
<svg class="a" style="left:1560.4px;top:1610.8px" width="16" height="16" viewBox="0 0 16 16"><path d="M1 1L15 15M15 1L1 15" stroke="#757575" stroke-width="2.4" fill="none"/></svg>
<svg class="a" style="left:2979px;top:1606px" width="15" height="10" viewBox="0 0 15 10"><path d="M0 0L15 0L7.5 10Z" fill="#5c6272"/></svg>
<svg class="a" style="left:3005px;top:1599px" width="14" height="27" viewBox="0 0 14 27"><path d="M4 0L10 0L10 2L9.5 2L10.5 12L14 12L14 14.5L0 14.5L0 12L3.5 12L4.5 2L4 2Z" fill="#5e5e5e"/><path d="M7 14.5L7 27" stroke="#8a8a8a" stroke-width="1.8"/></svg>
<svg class="a" style="left:3030px;top:1601px" width="21" height="22" viewBox="0 0 21 22"><path d="M1.5 1L19.5 21M19.5 1L1.5 21" stroke="#4e4e4e" stroke-width="2.8" fill="none"/></svg>
<svg style="position:absolute;left:1262.8px;top:1654.7px;overflow:visible" width="20.6" height="34.7" viewBox="0 0 100 100" preserveAspectRatio="none" ><path d="M8 2L52 60" fill="none" stroke="#7a5a34" stroke-width="2.6" vector-effect="non-scaling-stroke" stroke-linecap="butt" stroke-linejoin="round"/><path d="M38 56L62 50L100 88L56 100L40 80Z" fill="#ecd6ac" stroke="#b08c58" stroke-width="1.2" vector-effect="non-scaling-stroke" stroke-linejoin="round"/><path d="M40 58L62 52" fill="none" stroke="#d8502e" stroke-width="2.2" vector-effect="non-scaling-stroke" stroke-linecap="butt" stroke-linejoin="round"/></svg>
<div class="a" style="left:1253.8px;top:1701px;width:2.6px;height:295px;background:#d6d8de"></div>
<div class="a" style="left:3026.6px;top:1701px;width:2px;height:294px;background:#e1e3e8"></div><div class="a" style="left:3036px;top:1701px;width:30.5px;height:294px;background:linear-gradient(90deg,#efefef,#e9e9e9)"></div>
<div class="a" style="left:3037.8px;top:1778.8px;width:26.6px;height:157px;border:1.6px solid #8a8a8a;border-radius:4px;box-shadow:inset 0 0 0 1.6px #fcfcfc;background:linear-gradient(90deg,#f3f3f3 0%,#e9e9e9 42%,#cfcfcf 58%,#c6c6c6 100%)"></div>
<svg class="a" style="left:3044.5px;top:1846px" width="14" height="22" viewBox="0 0 14 22"><path d="M1 5L13 3M1 11.5L13 9.5M1 18L13 16" stroke="#3c3c3c" stroke-width="2.8"/></svg>
<svg class="a" style="left:3045.5px;top:1714.5px" width="12" height="8.5" viewBox="0 0 12 8.5"><path d="M0 8.5L7 0L12 8.5Z" fill="#8c8c8c"/></svg>
<svg class="a" style="left:3045.5px;top:1970.3px" width="12" height="9" viewBox="0 0 13 9"><path d="M0 0L13 0L6.5 9Z" fill="#5a5a5a"/></svg>
<svg style="position:absolute;left:54.8px;top:298.8px;overflow:visible" width="29.5" height="28.8" viewBox="0 0 100 100" preserveAspectRatio="none" ><path d="M63 1L100 50L63 99L38 50Z" fill="#3f68a4"/><path d="M3 44L30 11L57 5L31 45Z" fill="#3565a6"/><path d="M3 56L31 55L57 95L30 89Z" fill="#3565a6"/></svg>
<svg style="position:absolute;left:89.6px;top:333.9px;overflow:visible" width="30.0" height="35.1" viewBox="0 0 100 100" preserveAspectRatio="none" ><ellipse cx="50" cy="50" rx="46" ry="46" fill="#fff" stroke="#4b88c8" stroke-width="2.6" vector-effect="non-scaling-stroke"/><rect x="27" y="27" width="46" height="10" fill="#2c67b0"/><rect x="27" y="45" width="46" height="10" fill="#2c67b0"/><rect x="27" y="63" width="46" height="10" fill="#2c67b0"/></svg>
<svg style="position:absolute;left:91.3px;top:373.6px;overflow:visible" width="24.4" height="28.6" viewBox="0 0 100 100" preserveAspectRatio="none" ><path d="M0 14L18 0L82 0L100 17L100 100L30 100L0 80Z" fill="#4a80bd"/><path d="M5 12L30 26L100 26" fill="none" stroke="#fff" stroke-width="2.2" vector-effect="non-scaling-stroke" stroke-linecap="butt" stroke-linejoin="round"/><path d="M30 26L30 100" fill="none" stroke="#fff" stroke-width="2.2" vector-effect="non-scaling-stroke" stroke-linecap="butt" stroke-linejoin="round"/></svg>
<svg style="position:absolute;left:130.0px;top:418.5px;overflow:visible" width="16.5" height="17.2" viewBox="0 0 100 100" preserveAspectRatio="none" ><rect x="0" y="0" width="100" height="24" fill="#2c67b0"/><rect x="0" y="38" width="100" height="24" fill="#2c67b0"/><rect x="0" y="76" width="100" height="24" fill="#2c67b0"/></svg>
<svg style="position:absolute;left:126.0px;top:446.5px;overflow:visible" width="28.0" height="35.8" viewBox="0 0 100 100" preserveAspectRatio="none" ><path d="M50 12L2 100" fill="none" stroke="#6e6e6e" stroke-width="2.2" vector-effect="non-scaling-stroke" stroke-linecap="butt" stroke-linejoin="round"/><path d="M52 12L98 100" fill="none" stroke="#6e6e6e" stroke-width="2.2" vector-effect="non-scaling-stroke" stroke-linecap="butt" stroke-linejoin="round"/><ellipse cx="51" cy="7" rx="5" ry="5" fill="#fff" stroke="#6e6e6e" stroke-width="1.6" vector-effect="non-scaling-stroke"/><path d="M2 10 C 12 55, 45 68, 70 52" fill="none" stroke="#6e6e6e" stroke-width="2" vector-effect="non-scaling-stroke" stroke-linecap="butt" stroke-linejoin="round"/></svg>
<svg style="position:absolute;left:159.3px;top:484.2px;overflow:visible" width="29.3" height="35.2" viewBox="0 0 100 100" preserveAspectRatio="none" ><path d="M18 8 C18 -2,78 -2,78 8 L78 92 C78 102,18 102,18 92Z" fill="#fff" stroke="#777" stroke-width="2" vector-effect="non-scaling-stroke" stroke-linecap="butt" stroke-linejoin="round"/><path d="M18 8 C18 18,78 18,78 8" fill="none" stroke="#777" stroke-width="1.6" vector-effect="non-scaling-stroke" stroke-linecap="butt" stroke-linejoin="round"/><path d="M18 86 C18 78,78 78,78 86" fill="none" stroke="#999" stroke-width="1.4" vector-effect="non-scaling-stroke" stroke-linecap="butt" stroke-linejoin="round"/><path d="M0 28L60 28L100 68L40 68Z" fill="#e8694a" opacity="0.85"/><path d="M38 38L62 38" fill="none" stroke="#f6c0b0" stroke-width="1.5" vector-effect="non-scaling-stroke" stroke-linecap="butt" stroke-linejoin="round"/><path d="M45 50L72 50" fill="none" stroke="#f6c0b0" stroke-width="1.5" vector-effect="non-scaling-stroke" stroke-linecap="butt" stroke-linejoin="round"/><path d="M52 60L78 60" fill="none" stroke="#f6c0b0" stroke-width="1.5" vector-effect="non-scaling-stroke" stroke-linecap="butt" stroke-linejoin="round"/></svg>
<svg style="position:absolute;left:196.0px;top:522.3px;overflow:visible" width="27.8" height="35.3" viewBox="0 0 100 100" preserveAspectRatio="none" ><path d="M50 12L2 100" fill="none" stroke="#6e6e6e" stroke-width="2.2" vector-effect="non-scaling-stroke" stroke-linecap="butt" stroke-linejoin="round"/><path d="M52 12L98 100" fill="none" stroke="#6e6e6e" stroke-width="2.2" vector-effect="non-scaling-stroke" stroke-linecap="butt" stroke-linejoin="round"/><ellipse cx="51" cy="7" rx="5" ry="5" fill="#fff" stroke="#6e6e6e" stroke-width="1.6" vector-effect="non-scaling-stroke"/><path d="M2 10 C 12 55, 45 68, 70 52" fill="none" stroke="#6e6e6e" stroke-width="2" vector-effect="non-scaling-stroke" stroke-linecap="butt" stroke-linejoin="round"/></svg>
<svg style="position:absolute;left:230.5px;top:562.1px;overflow:visible" width="24.1" height="28.6" viewBox="0 0 100 100" preserveAspectRatio="none" ><ellipse cx="52" cy="50" rx="44" ry="46" fill="#e2e2e2" stroke="#707070" stroke-width="2.2" vector-effect="non-scaling-stroke"/><rect x="8" y="70" width="22" height="23" fill="#e0562b"/></svg>
<svg style="position:absolute;left:228.6px;top:604.2px;overflow:visible" width="26.0" height="22.3" viewBox="0 0 100 100" preserveAspectRatio="none" ><rect x="10" y="5" width="86" height="72" fill="#e2e2e2" stroke="#707070" stroke-width="2.2" vector-effect="non-scaling-stroke"/><rect x="0" y="70" width="23" height="30" fill="#e0562b"/></svg>
<svg style="position:absolute;left:228.6px;top:641.8px;overflow:visible" width="26.0" height="22.3" viewBox="0 0 100 100" preserveAspectRatio="none" ><rect x="10" y="5" width="86" height="72" fill="#e2e2e2" stroke="#707070" stroke-width="2.2" vector-effect="non-scaling-stroke"/><rect x="0" y="70" width="23" height="30" fill="#e0562b"/></svg>
<svg style="position:absolute;left:229.0px;top:672.6px;overflow:visible" width="29.0" height="35.4" viewBox="0 0 100 100" preserveAspectRatio="none" ><rect x="2" y="2" width="96" height="96" fill="#fff" stroke="#4aa335" stroke-width="2.2" vector-effect="non-scaling-stroke"/><rect x="8" y="8" width="84" height="84" fill="#f5b3a5"/><rect x="80" y="8" width="12" height="14" fill="#fff"/><rect x="8" y="74" width="12" height="18" fill="#fff"/><path d="M80 12L80 62L12 62" fill="none" stroke="#e2583a" stroke-width="2.4" vector-effect="non-scaling-stroke" stroke-linecap="butt" stroke-linejoin="round"/><path d="M22 92L22 38L88 38" fill="none" stroke="#e2583a" stroke-width="2.0" vector-effect="non-scaling-stroke" stroke-linecap="butt" stroke-linejoin="round"/><path d="M12 62L12 64" fill="none" stroke="#e2583a" stroke-width="2" vector-effect="non-scaling-stroke" stroke-linecap="butt" stroke-linejoin="round"/></svg>
<svg style="position:absolute;left:196.0px;top:712.5px;overflow:visible" width="26.3" height="30.1" viewBox="0 0 100 100" preserveAspectRatio="none" ><path d="M10 8L10 92L92 92" fill="none" stroke="#4aa335" stroke-width="2" vector-effect="non-scaling-stroke" stroke-linecap="butt" stroke-linejoin="round"/><path d="M10 92L92 92" fill="none" stroke="#b8323a" stroke-width="2.4" vector-effect="non-scaling-stroke" stroke-linecap="butt" stroke-linejoin="round"/><path d="M2 14L10 0L18 14Z" fill="#4aa335"/><path d="M88 84L100 92L88 100Z" fill="#b8323a"/><text x="26" y="58" font-family="Liberation Sans, sans-serif" font-size="50" fill="#707070" textLength="68" lengthAdjust="spacingAndGlyphs">xy</text></svg>
<svg style="position:absolute;left:159.4px;top:750.2px;overflow:visible" width="29.6" height="30.4" viewBox="0 0 100 100" preserveAspectRatio="none" ><rect x="2" y="2" width="82" height="76" fill="#f4f4f4" stroke="#707070" stroke-width="2.2" vector-effect="non-scaling-stroke"/><path d="M24 28L46 22L96 78L96 100L72 100L24 44Z" fill="#f6c3b4" stroke="#e2583a" stroke-width="2" vector-effect="non-scaling-stroke" stroke-linejoin="round"/><rect x="72" y="76" width="25" height="24" fill="#f09a80" stroke="#e2583a" stroke-width="2" vector-effect="non-scaling-stroke"/><path d="M46 24L94 78" fill="none" stroke="#e2583a" stroke-width="1.6" vector-effect="non-scaling-stroke" stroke-linecap="butt" stroke-linejoin="round"/></svg>
<svg style="position:absolute;left:159.4px;top:785.7px;overflow:visible" width="29.1" height="34.7" viewBox="0 0 100 100" preserveAspectRatio="none" ><rect x="2" y="2" width="96" height="96" fill="#fff" stroke="#4aa335" stroke-width="2.2" vector-effect="non-scaling-stroke"/><rect x="8" y="8" width="84" height="84" fill="#f5b3a5"/><rect x="80" y="8" width="12" height="14" fill="#fff"/><rect x="8" y="74" width="12" height="18" fill="#fff"/><path d="M80 12L80 62L12 62" fill="none" stroke="#e2583a" stroke-width="2.4" vector-effect="non-scaling-stroke" stroke-linecap="butt" stroke-linejoin="round"/><path d="M22 92L22 38L88 38" fill="none" stroke="#e2583a" stroke-width="2.0" vector-effect="non-scaling-stroke" stroke-linecap="butt" stroke-linejoin="round"/><path d="M12 62L12 64" fill="none" stroke="#e2583a" stroke-width="2" vector-effect="non-scaling-stroke" stroke-linecap="butt" stroke-linejoin="round"/></svg>
<svg style="position:absolute;left:126.4px;top:825.4px;overflow:visible" width="26.2" height="30.5" viewBox="0 0 100 100" preserveAspectRatio="none" ><rect x="36" y="0" width="28" height="20" fill="#4a9e3a"/><rect x="0" y="22" width="28" height="20" fill="#4a9e3a"/><rect x="36" y="27" width="28" height="20" fill="#4a9e3a"/><rect x="72" y="22" width="28" height="20" fill="#3f7cc0"/><rect x="0" y="50" width="28" height="20" fill="#4a9e3a"/><rect x="36" y="54" width="28" height="20" fill="#4a9e3a"/><rect x="72" y="50" width="28" height="20" fill="#3f7cc0"/><rect x="36" y="81" width="28" height="20" fill="#4a9e3a"/></svg>
<svg style="position:absolute;left:123.8px;top:861.8px;overflow:visible" width="30.5" height="33.0" viewBox="0 0 100 100" preserveAspectRatio="none" ><defs><radialGradient id="hg" cx="0.45" cy="0.5" r="0.6"><stop offset="0" stop-color="#ffb000"/><stop offset="0.6" stop-color="#ff5a10"/><stop offset="1" stop-color="#e01808"/></radialGradient></defs><path d="M12 0 C-4 30,22 55,4 100" fill="none" stroke="#ff9a30" stroke-width="2.4" vector-effect="non-scaling-stroke" stroke-linecap="butt" stroke-linejoin="round"/><path d="M28 18L80 10L100 32L100 98L50 100L28 72Z" fill="#e81c0c"/><path d="M48 34L100 32L100 98L50 100Z" fill="url(#hg)"/><path d="M28 18L80 10L100 32L48 34Z" fill="#f03818"/></svg>
<svg style="position:absolute;left:159.4px;top:900.7px;overflow:visible" width="29.6" height="27.9" viewBox="0 0 100 100" preserveAspectRatio="none" ><text x="0" y="40" font-family="Liberation Sans, sans-serif" font-weight="bold" font-size="52" fill="#2a2a2a" textLength="26" lengthAdjust="spacingAndGlyphs">D</text><path d="M34 6 L88 6 C102 12,102 38,90 44 L14 44 C24 38,30 46,34 46Z" fill="#4a80bd"/><rect x="34" y="6" width="10" height="40" fill="#4a80bd"/><path d="M12 52 L90 52 C102 60,102 92,88 100 L14 100 C2 92,2 60,12 52Z" fill="#4a80bd"/><path d="M10 54 C20 66,20 88,12 100" fill="none" stroke="#c8d8ec" stroke-width="1.2" vector-effect="non-scaling-stroke" stroke-linecap="butt" stroke-linejoin="round"/></svg>
<svg style="position:absolute;left:159.4px;top:938.3px;overflow:visible" width="29.6" height="27.9" viewBox="0 0 100 100" preserveAspectRatio="none" ><text x="0" y="40" font-family="Liberation Sans, sans-serif" font-weight="bold" font-size="52" fill="#2a2a2a" textLength="26" lengthAdjust="spacingAndGlyphs">D</text><path d="M34 6 L88 6 C102 12,102 38,90 44 L14 44 C24 38,30 46,34 46Z" fill="#dcdcdc"/><rect x="34" y="6" width="10" height="40" fill="#dcdcdc"/><path d="M12 52 L90 52 C102 60,102 92,88 100 L14 100 C2 92,2 60,12 52Z" fill="#4a80bd"/><path d="M10 54 C20 66,20 88,12 100" fill="none" stroke="#c8d8ec" stroke-width="1.2" vector-effect="non-scaling-stroke" stroke-linecap="butt" stroke-linejoin="round"/></svg>
<svg style="position:absolute;left:159.4px;top:975.9px;overflow:visible" width="29.6" height="27.9" viewBox="0 0 100 100" preserveAspectRatio="none" ><text x="0" y="40" font-family="Liberation Sans, sans-serif" font-weight="bold" font-size="52" fill="#2a2a2a" textLength="26" lengthAdjust="spacingAndGlyphs">D</text><path d="M34 6 L88 6 C102 12,102 38,90 44 L14 44 C24 38,30 46,34 46Z" fill="#4a80bd"/><rect x="34" y="6" width="10" height="40" fill="#4a80bd"/><path d="M12 52 L90 52 C102 60,102 92,88 100 L14 100 C2 92,2 60,12 52Z" fill="#4a80bd"/><path d="M10 54 C20 66,20 88,12 100" fill="none" stroke="#c8d8ec" stroke-width="1.2" vector-effect="non-scaling-stroke" stroke-linecap="butt" stroke-linejoin="round"/></svg>
<svg style="position:absolute;left:125.3px;top:1013.1px;overflow:visible" width="28.6" height="29.6" viewBox="0 0 100 100" preserveAspectRatio="none" ><path d="M50 2L98 96L2 96Z" fill="#dfe9f5" stroke="#4a80bd" stroke-width="2.4" vector-effect="non-scaling-stroke" stroke-linejoin="round"/><path d="M26 50L74 50L50 96L26 50" fill="none" stroke="#7aa2d2" stroke-width="1.3" vector-effect="non-scaling-stroke" stroke-linecap="butt" stroke-linejoin="round"/><path d="M38 26L62 26L50 50L38 26" fill="none" stroke="#7aa2d2" stroke-width="1.3" vector-effect="non-scaling-stroke" stroke-linecap="butt" stroke-linejoin="round"/><path d="M14 73L38 73L26 96" fill="none" stroke="#7aa2d2" stroke-width="1.3" vector-effect="non-scaling-stroke" stroke-linecap="butt" stroke-linejoin="round"/><path d="M62 73L86 73L74 96" fill="none" stroke="#7aa2d2" stroke-width="1.3" vector-effect="non-scaling-stroke" stroke-linecap="butt" stroke-linejoin="round"/><path d="M38 73L50 50L62 73L38 73" fill="none" stroke="#7aa2d2" stroke-width="1.3" vector-effect="non-scaling-stroke" stroke-linecap="butt" stroke-linejoin="round"/></svg>
<svg style="position:absolute;left:159.6px;top:1048.8px;overflow:visible" width="29.3" height="34.6" viewBox="0 0 100 100" preserveAspectRatio="none" ><path d="M40 22L70 66L8 66Z" fill="#e6e6e6" stroke="#808080" stroke-width="2" vector-effect="non-scaling-stroke" stroke-linejoin="round"/><path d="M24 44L55 44L40 66L24 44" fill="none" stroke="#9a9a9a" stroke-width="1.2" vector-effect="non-scaling-stroke" stroke-linecap="butt" stroke-linejoin="round"/><rect x="82" y="0" width="14" height="100" fill="#3f7cc0"/><rect x="0" y="84" width="96" height="16" fill="#3f7cc0"/><path d="M13 84L13 100" fill="none" stroke="#a8c4e6" stroke-width="1" vector-effect="non-scaling-stroke" stroke-linecap="butt" stroke-linejoin="round"/><path d="M26 84L26 100" fill="none" stroke="#a8c4e6" stroke-width="1" vector-effect="non-scaling-stroke" stroke-linecap="butt" stroke-linejoin="round"/><path d="M39 84L39 100" fill="none" stroke="#a8c4e6" stroke-width="1" vector-effect="non-scaling-stroke" stroke-linecap="butt" stroke-linejoin="round"/><path d="M52 84L52 100" fill="none" stroke="#a8c4e6" stroke-width="1" vector-effect="non-scaling-stroke" stroke-linecap="butt" stroke-linejoin="round"/><path d="M65 84L65 100" fill="none" stroke="#a8c4e6" stroke-width="1" vector-effect="non-scaling-stroke" stroke-linecap="butt" stroke-linejoin="round"/><path d="M78 84L78 100" fill="none" stroke="#a8c4e6" stroke-width="1" vector-effect="non-scaling-stroke" stroke-linecap="butt" stroke-linejoin="round"/><path d="M82 13L96 13" fill="none" stroke="#a8c4e6" stroke-width="1" vector-effect="non-scaling-stroke" stroke-linecap="butt" stroke-linejoin="round"/><path d="M82 26L96 26" fill="none" stroke="#a8c4e6" stroke-width="1" vector-effect="non-scaling-stroke" stroke-linecap="butt" stroke-linejoin="round"/><path d="M82 39L96 39" fill="none" stroke="#a8c4e6" stroke-width="1" vector-effect="non-scaling-stroke" stroke-linecap="butt" stroke-linejoin="round"/><path d="M82 52L96 52" fill="none" stroke="#a8c4e6" stroke-width="1" vector-effect="non-scaling-stroke" stroke-linecap="butt" stroke-linejoin="round"/><path d="M82 65L96 65" fill="none" stroke="#a8c4e6" stroke-width="1" vector-effect="non-scaling-stroke" stroke-linecap="butt" stroke-linejoin="round"/><path d="M82 78L96 78" fill="none" stroke="#a8c4e6" stroke-width="1" vector-effect="non-scaling-stroke" stroke-linecap="butt" stroke-linejoin="round"/></svg>
<svg style="position:absolute;left:159.6px;top:1088.5px;overflow:visible" width="28.9" height="28.5" viewBox="0 0 100 100" preserveAspectRatio="none" ><path d="M2 4L42 0L98 96L40 96L2 62Z" fill="#dfe9f5" stroke="#4a80bd" stroke-width="2.4" vector-effect="non-scaling-stroke" stroke-linejoin="round"/><path d="M2 4L40 50L2 62" fill="none" stroke="#7aa2d2" stroke-width="1.3" vector-effect="non-scaling-stroke" stroke-linecap="butt" stroke-linejoin="round"/><path d="M42 0L40 50L70 50" fill="none" stroke="#7aa2d2" stroke-width="1.3" vector-effect="non-scaling-stroke" stroke-linecap="butt" stroke-linejoin="round"/><path d="M40 50L40 96" fill="none" stroke="#7aa2d2" stroke-width="1.3" vector-effect="non-scaling-stroke" stroke-linecap="butt" stroke-linejoin="round"/><path d="M22 28L56 26" fill="none" stroke="#7aa2d2" stroke-width="1.3" vector-effect="non-scaling-stroke" stroke-linecap="butt" stroke-linejoin="round"/><path d="M20 78L40 50L68 96" fill="none" stroke="#7aa2d2" stroke-width="1.3" vector-effect="non-scaling-stroke" stroke-linecap="butt" stroke-linejoin="round"/><path d="M55 72L84 72" fill="none" stroke="#7aa2d2" stroke-width="1.3" vector-effect="non-scaling-stroke" stroke-linecap="butt" stroke-linejoin="round"/></svg>
<svg style="position:absolute;left:159.6px;top:1124.1px;overflow:visible" width="29.3" height="35.0" viewBox="0 0 100 100" preserveAspectRatio="none" ><rect x="2" y="2" width="96" height="96" fill="#fff" stroke="#4aa335" stroke-width="2.2" vector-effect="non-scaling-stroke"/><path d="M14 48L28 14L50 60Z" fill="#e0e0e0" stroke="#909090" stroke-width="1.4" vector-effect="non-scaling-stroke" stroke-linejoin="round"/><path d="M24 56L40 20L62 66Z" fill="#e0e0e0" stroke="#909090" stroke-width="1.4" vector-effect="non-scaling-stroke" stroke-linejoin="round"/><path d="M34 86L62 34L90 86Z" fill="#dfe9f5" stroke="#3f7cc0" stroke-width="2.2" vector-effect="non-scaling-stroke" stroke-linejoin="round"/><path d="M48 60L76 60L62 86L48 60" fill="none" stroke="#7aa2d2" stroke-width="1.2" vector-effect="non-scaling-stroke" stroke-linecap="butt" stroke-linejoin="round"/></svg>
<svg style="position:absolute;left:197.0px;top:1165.9px;overflow:visible" width="23.6" height="27.5" viewBox="0 0 100 100" preserveAspectRatio="none" ><rect x="0" y="0" width="100" height="100" fill="#e4e4e0" stroke="#4a78b8" stroke-width="2" vector-effect="non-scaling-stroke"/><path d="M14 0L14 100" fill="none" stroke="#4a78b8" stroke-width="1.3" vector-effect="non-scaling-stroke" stroke-linecap="butt" stroke-linejoin="round"/><path d="M28 0L28 100" fill="none" stroke="#4a78b8" stroke-width="1.3" vector-effect="non-scaling-stroke" stroke-linecap="butt" stroke-linejoin="round"/><path d="M42 0L42 100" fill="none" stroke="#4a78b8" stroke-width="1.3" vector-effect="non-scaling-stroke" stroke-linecap="butt" stroke-linejoin="round"/><path d="M70 0L70 100" fill="none" stroke="#4a78b8" stroke-width="1.3" vector-effect="non-scaling-stroke" stroke-linecap="butt" stroke-linejoin="round"/><path d="M0 30L100 30" fill="none" stroke="#4a78b8" stroke-width="1.3" vector-effect="non-scaling-stroke" stroke-linecap="butt" stroke-linejoin="round"/><path d="M0 58L100 58" fill="none" stroke="#4a78b8" stroke-width="1.3" vector-effect="non-scaling-stroke" stroke-linecap="butt" stroke-linejoin="round"/><path d="M0 72L100 72" fill="none" stroke="#4a78b8" stroke-width="1.3" vector-effect="non-scaling-stroke" stroke-linecap="butt" stroke-linejoin="round"/><path d="M0 86L100 86" fill="none" stroke="#4a78b8" stroke-width="1.3" vector-effect="non-scaling-stroke" stroke-linecap="butt" stroke-linejoin="round"/></svg>
<svg style="position:absolute;left:89.7px;top:1206.6px;overflow:visible" width="29.5" height="17.3" viewBox="0 0 100 100" preserveAspectRatio="none" ><path d="M2 30 C12 0,22 0,30 40 C34 62,40 70,46 60" fill="none" stroke="#3f6fae" stroke-width="2.2" vector-effect="non-scaling-stroke" stroke-linecap="butt" stroke-linejoin="round"/><ellipse cx="56" cy="62" rx="12" ry="30" fill="none" stroke="#3f6fae" stroke-width="2.2" vector-effect="non-scaling-stroke"/><ellipse cx="86" cy="58" rx="12" ry="32" fill="none" stroke="#3f6fae" stroke-width="2.2" vector-effect="non-scaling-stroke"/><path d="M68 50L74 50" fill="none" stroke="#3f6fae" stroke-width="2" vector-effect="non-scaling-stroke" stroke-linecap="butt" stroke-linejoin="round"/></svg>
<svg style="position:absolute;left:124.9px;top:1237.1px;overflow:visible" width="29.0" height="33.6" viewBox="0 0 100 100" preserveAspectRatio="none" ><path d="M8 4L8 92L96 92" fill="none" stroke="#707070" stroke-width="2" vector-effect="non-scaling-stroke" stroke-linecap="butt" stroke-linejoin="round"/><path d="M3 12L8 0L13 12Z" fill="#707070"/><path d="M88 87L100 92L88 97Z" fill="#707070"/><path d="M20 26L98 26" fill="none" stroke="#808080" stroke-width="1.6" vector-effect="non-scaling-stroke" stroke-linecap="butt" stroke-linejoin="round"/><path d="M18 74 C30 42,58 36,96 34" fill="none" stroke="#3f6fae" stroke-width="2.2" vector-effect="non-scaling-stroke" stroke-linecap="butt" stroke-linejoin="round"/></svg>
<svg style="position:absolute;left:89.7px;top:1274.8px;overflow:visible" width="29.5" height="32.6" viewBox="0 0 100 100" preserveAspectRatio="none" ><path d="M0 58L10 58L10 86L96 86L96 100L14 100L0 84Z" fill="#c8c8c8" stroke="#707070" stroke-width="1.6" vector-effect="non-scaling-stroke" stroke-linejoin="round"/><rect x="22" y="2" width="50" height="70" fill="#f4f4f4" stroke="#707070" stroke-width="1.6" vector-effect="non-scaling-stroke"/><rect x="30" y="10" width="50" height="72" fill="#f4f4f4" stroke="#707070" stroke-width="1.6" vector-effect="non-scaling-stroke"/><rect x="38" y="18" width="56" height="70" fill="#f8f8f8" stroke="#606060" stroke-width="1.8" vector-effect="non-scaling-stroke"/><defs><linearGradient id="rg" x1="0" x2="1"><stop offset="0" stop-color="#e0203a"/><stop offset="0.55" stop-color="#f07010"/><stop offset="1" stop-color="#f6a020"/></linearGradient></defs><rect x="46" y="32" width="40" height="44" fill="url(#rg)"/></svg>
<svg style="position:absolute;left:31.0px;top:307.5px;overflow:visible" width="11.5" height="13.5" viewBox="0 0 100 100" preserveAspectRatio="none" ><path d="M100 0L100 100L0 100Z" fill="#2b2b2b"/><path d="M88 45L88 88L45 88Z" fill="#5a5a5a"/></svg>
<svg style="position:absolute;left:65.8px;top:382.7px;overflow:visible" width="11.5" height="13.5" viewBox="0 0 100 100" preserveAspectRatio="none" ><path d="M100 0L100 100L0 100Z" fill="#2b2b2b"/><path d="M88 45L88 88L45 88Z" fill="#5a5a5a"/></svg>
<svg style="position:absolute;left:100.5px;top:457.8px;overflow:visible" width="11.5" height="13.5" viewBox="0 0 100 100" preserveAspectRatio="none" ><path d="M100 0L100 100L0 100Z" fill="#2b2b2b"/><path d="M88 45L88 88L45 88Z" fill="#5a5a5a"/></svg>
<svg style="position:absolute;left:135.2px;top:495.4px;overflow:visible" width="11.5" height="13.5" viewBox="0 0 100 100" preserveAspectRatio="none" ><path d="M100 0L100 100L0 100Z" fill="#2b2b2b"/><path d="M88 45L88 88L45 88Z" fill="#5a5a5a"/></svg>
<svg style="position:absolute;left:170.0px;top:533.0px;overflow:visible" width="11.5" height="13.5" viewBox="0 0 100 100" preserveAspectRatio="none" ><path d="M100 0L100 100L0 100Z" fill="#2b2b2b"/><path d="M88 45L88 88L45 88Z" fill="#5a5a5a"/></svg>
<svg style="position:absolute;left:100.5px;top:871.2px;overflow:visible" width="11.5" height="13.5" viewBox="0 0 100 100" preserveAspectRatio="none" ><path d="M100 0L100 100L0 100Z" fill="#2b2b2b"/><path d="M88 45L88 88L45 88Z" fill="#5a5a5a"/></svg>
<svg style="position:absolute;left:100.5px;top:1021.5px;overflow:visible" width="11.5" height="13.5" viewBox="0 0 100 100" preserveAspectRatio="none" ><path d="M100 0L100 100L0 100Z" fill="#2b2b2b"/><path d="M88 45L88 88L45 88Z" fill="#5a5a5a"/></svg>
<svg style="position:absolute;left:135.2px;top:1134.3px;overflow:visible" width="11.5" height="13.5" viewBox="0 0 100 100" preserveAspectRatio="none" ><path d="M100 0L100 100L0 100Z" fill="#2b2b2b"/><path d="M88 45L88 88L45 88Z" fill="#5a5a5a"/></svg>
<svg style="position:absolute;left:65.8px;top:1209.4px;overflow:visible" width="11.5" height="13.5" viewBox="0 0 100 100" preserveAspectRatio="none" ><path d="M100 0L100 100L0 100Z" fill="#2b2b2b"/><path d="M88 45L88 88L45 88Z" fill="#5a5a5a"/></svg>
<svg style="position:absolute;left:104.5px;top:418.6px;overflow:visible" width="9.0" height="18.0" viewBox="0 0 100 100" preserveAspectRatio="none" ><path d="M8 4L92 50L8 96Z" fill="#fff" stroke="#b4b4b4" stroke-width="1.8" vector-effect="non-scaling-stroke" stroke-linejoin="round"/></svg>
<svg style="position:absolute;left:174.0px;top:719.3px;overflow:visible" width="9.0" height="18.0" viewBox="0 0 100 100" preserveAspectRatio="none" ><path d="M8 4L92 50L8 96Z" fill="#fff" stroke="#b4b4b4" stroke-width="1.8" vector-effect="non-scaling-stroke" stroke-linejoin="round"/></svg>
<svg style="position:absolute;left:69.8px;top:1283.0px;overflow:visible" width="9.0" height="18.0" viewBox="0 0 100 100" preserveAspectRatio="none" ><path d="M8 4L92 50L8 96Z" fill="#fff" stroke="#b4b4b4" stroke-width="1.8" vector-effect="non-scaling-stroke" stroke-linejoin="round"/></svg>
<span class="t" style="left:91.88px;top:301.95px;font-size:27.5px;transform:scaleX(0.8189);">meshing.mph</span>
<span class="t" style="left:232.22px;top:301.95px;font-size:27.5px;transform:scaleX(0.7790);font-style:italic;">(root)</span>
<span class="t" style="left:126.60px;top:339.53px;font-size:27.5px;transform:scaleX(0.7976);">Global Definitions</span>
<span class="t" style="left:126.10px;top:377.11px;font-size:27.5px;transform:scaleX(0.7997);">Component 1</span>
<span class="t" style="left:266.55px;top:377.11px;font-size:27.5px;transform:scaleX(0.7467);font-style:italic;">(comp1)</span>
<span class="t" style="left:160.86px;top:414.69px;font-size:27.5px;transform:scaleX(0.8182);">Definitions</span>
<span class="t" style="left:161.74px;top:452.27px;font-size:27.5px;transform:scaleX(0.7640);">Geometry 1</span>
<span class="t" style="left:196.20px;top:489.85px;font-size:27.5px;transform:scaleX(0.7564);">Work Plane 1</span>
<span class="t" style="left:328.01px;top:489.85px;font-size:27.5px;transform:scaleX(0.7927);font-style:italic;">(wp1)</span>
<span class="t" style="left:229.75px;top:527.43px;font-size:27.5px;transform:scaleX(0.7748);">Plane Geometry</span>
<span class="t" style="left:265.86px;top:565.01px;font-size:27.5px;transform:scaleX(0.7446);">Circle 1</span>
<span class="t" style="left:342.59px;top:565.01px;font-size:27.5px;transform:scaleX(0.7146);font-style:italic;">(c1)</span>
<span class="t" style="left:265.10px;top:602.59px;font-size:27.5px;transform:scaleX(0.7493);">Rectangle 1</span>
<span class="t" style="left:382.44px;top:602.59px;font-size:27.5px;transform:scaleX(0.7584);font-style:italic;">(r1)</span>
<span class="t" style="left:265.08px;top:640.17px;font-size:27.5px;transform:scaleX(0.7597);">Rectangle 2</span>
<span class="t" style="left:383.16px;top:640.17px;font-size:27.5px;transform:scaleX(0.7412);font-style:italic;">(r2)</span>
<span class="t" style="left:265.04px;top:677.75px;font-size:27.5px;transform:scaleX(0.7804);">Union 1</span>
<span class="t" style="left:346.31px;top:677.75px;font-size:27.5px;transform:scaleX(0.7938);font-style:italic;">(uni1)</span>
<span class="t" style="left:231.30px;top:715.33px;font-size:27.5px;transform:scaleX(0.7542);">View 2</span>
<span class="t" style="left:195.12px;top:752.91px;font-size:27.5px;transform:scaleX(0.7394);">Extrude 1</span>
<span class="t" style="left:289.76px;top:752.91px;font-size:27.5px;transform:scaleX(0.7441);font-style:italic;">(ext1)</span>
<span class="t" style="left:194.99px;top:790.49px;font-size:27.5px;transform:scaleX(0.8072);">Form Union</span>
<span class="t" style="left:316.66px;top:790.49px;font-size:27.5px;transform:scaleX(0.8429);font-style:italic;">(fin)</span>
<span class="t" style="left:160.30px;top:828.07px;font-size:27.5px;transform:scaleX(0.8005);">Materials</span>
<span class="t" style="left:160.35px;top:865.65px;font-size:27.5px;transform:scaleX(0.7756);">Heat Transfer in Solids</span>
<span class="t" style="left:383.60px;top:865.65px;font-size:27.5px;transform:scaleX(0.8007);font-style:italic;">(ht)</span>
<span class="t" style="left:195.37px;top:903.23px;font-size:27.5px;transform:scaleX(0.7673);">Heat Transfer in Solids 1</span>
<span class="t" style="left:196.90px;top:940.81px;font-size:27.5px;transform:scaleX(0.7835);">Thermal Insulation 1</span>
<span class="t" style="left:194.14px;top:978.39px;font-size:27.5px;transform:scaleX(0.7803);">Initial Values 1</span>
<span class="t" style="left:160.48px;top:1015.97px;font-size:27.5px;transform:scaleX(0.7619);">Mesh 1</span>
<span class="t" style="left:195.92px;top:1053.55px;font-size:27.5px;transform:scaleX(0.6820);">Size</span>
<span class="t" style="left:195.07px;top:1091.13px;font-size:27.5px;transform:scaleX(0.7638);">Free Triangular 1</span>
<span class="t" style="left:195.86px;top:1128.71px;font-size:27.5px;transform:scaleX(0.7448);">Swept 1</span>
<span class="t" style="left:229.58px;top:1166.29px;font-size:27.5px;transform:scaleX(0.8098);">Distribution 1</span>
<span class="t" style="left:125.64px;top:1203.87px;font-size:27.5px;transform:scaleX(0.7608);">Study 1</span>
<span class="t" style="left:160.84px;top:1241.45px;font-size:27.5px;transform:scaleX(0.7588);">Step 1: Stationary</span>
<span class="t" style="left:125.91px;top:1279.03px;font-size:27.5px;transform:scaleX(0.7443);">Results</span>
<span class="t" style="left:530.51px;top:304.00px;font-size:28px;transform:scaleX(0.8472);">Domain Selection</span>
<span class="t" style="left:486.72px;top:375.25px;font-size:27.5px;transform:scaleX(0.7754);">Selection:</span>
<span class="t" style="left:605.15px;top:374.45px;font-size:27.5px;transform:scaleX(0.8268);">Manual</span>
<span class="t" style="left:499.80px;top:445.05px;font-size:17.5px;transform:scaleX(0.7184);font-weight:bold;color:#2e9e3e;">ON</span>
<span class="t" style="left:489.30px;top:523.25px;font-size:27.5px;transform:scaleX(0.8111);">Active</span>
<span class="t" style="left:529.42px;top:728.60px;font-size:28px;transform:scaleX(0.8895);">Distribution</span>
<span class="t" style="left:486.18px;top:793.75px;font-size:27.5px;transform:scaleX(0.8118);">Distribution properties:</span>
<span class="t" style="left:493.11px;top:846.85px;font-size:27.5px;transform:scaleX(0.7929);">Fixed number of elements</span>
<span class="t" style="left:486.19px;top:898.85px;font-size:27.5px;transform:scaleX(0.8068);">Number of elements:</span>
<span class="t" style="left:493.10px;top:952.75px;font-size:27.5px;transform:scaleX(0.7988);">10</span>
<span class="t" style="left:1264.18px;top:1600.55px;font-size:27.5px;transform:scaleX(0.9110);">Log</span>
<span class="t" style="left:1331.60px;top:1600.55px;font-size:27.5px;transform:scaleX(0.8786);">Table</span>
<span class="t" style="left:1443.26px;top:1602.25px;font-size:27.5px;transform:scaleX(0.8721);color:#2b5a9e;">Messages</span>
<span class="t" style="left:1606.04px;top:1600.55px;font-size:27.5px;transform:scaleX(0.8789);">Progress</span>
<span class="t" style="left:1261.35px;top:1700.35px;font-size:27.5px;transform:scaleX(0.7730);">Finalized geometry has 1 domain, 18 boundaries, 48 edges, and 32 vertices.</span>
<span class="t" style="left:1261.34px;top:1733.50px;font-size:27.5px;transform:scaleX(0.7802);">Mesh consists of 178 boundary elements and 44 edge elements.</span>
<span class="t" style="left:1261.34px;top:1766.65px;font-size:27.5px;transform:scaleX(0.7802);">Mesh consists of 480 boundary elements and 68 edge elements.</span>
<span class="t" style="left:1262.12px;top:1799.80px;font-size:27.5px;transform:scaleX(0.7805);">Complete mesh consists of 480 domain elements, 1028 boundary elements, and 152 edge elements.</span>
<span class="t" style="left:1262.12px;top:1832.95px;font-size:27.5px;transform:scaleX(0.7799);">Complete mesh consists of 4800 domain elements, 1640 boundary elements, and 296 edge elements.</span>
<span class="t" style="left:1262.11px;top:1866.10px;font-size:27.5px;transform:scaleX(0.7904);">Saved file: meshing.mph</span>
<span class="t" style="left:1261.36px;top:1899.25px;font-size:27.5px;transform:scaleX(0.7702);">Finalized geometry has 13 domains, 62 boundaries, 96 edges, and 48 vertices.</span>
<span class="t" style="left:1262.12px;top:1932.40px;font-size:27.5px;transform:scaleX(0.7799);">Complete mesh consists of 5460 domain elements, 2572 boundary elements, and 536 edge elements.</span>
<span class="t" style="left:1262.12px;top:1965.55px;font-size:27.5px;transform:scaleX(0.7805);">Complete mesh consists of 11000 domain elements, 4240 boundary elements, and 648 edge elements.</span>
<span class="t" style="left:1319.35px;top:841.50px;font-size:35px;transform:scaleX(0.6473);color:#141a1e;-webkit-text-stroke:0;">0.05</span>
<span class="t" style="left:1334.30px;top:841.50px;font-size:35px;transform:scaleX(0.7000);color:#141a1e;-webkit-text-stroke:0;">0</span>
<span class="t" style="left:1470.10px;top:984.50px;font-size:35px;transform:scaleX(0.9000);color:#141a1e;-webkit-text-stroke:0;">2</span>
<span class="t" style="left:1633.91px;top:1108.30px;font-size:35px;transform:scaleX(0.8889);color:#141a1e;-webkit-text-stroke:0;">0</span>
<span class="t" style="left:1575.18px;top:1167.30px;font-size:43px;transform:scaleX(0.8619);color:#141a1e;-webkit-text-stroke:0;">×</span>
<span class="t" style="left:1599.51px;top:1171.80px;font-size:35px;transform:scaleX(0.8940);color:#141a1e;-webkit-text-stroke:0;">10</span>
<span class="t" style="left:1635.50px;top:1163.70px;font-size:24px;transform:scaleX(0.8769);color:#141a1e;-webkit-text-stroke:0;">3</span>
<span class="t" style="left:1802.40px;top:1240.20px;font-size:35px;transform:scaleX(0.8969);color:#141a1e;-webkit-text-stroke:0;">-2</span>
<span class="t" style="left:2753.96px;top:1009.80px;font-size:35px;transform:scaleX(0.8353);color:#141a1e;-webkit-text-stroke:0;">2</span>
<span class="t" style="left:2490.56px;top:1127.00px;font-size:35px;transform:scaleX(0.8444);color:#141a1e;-webkit-text-stroke:0;">0</span>
<span class="t" style="left:2491.61px;top:1188.60px;font-size:43px;transform:scaleX(0.8429);color:#141a1e;-webkit-text-stroke:0;">×</span>
<span class="t" style="left:2516.43px;top:1193.10px;font-size:35px;transform:scaleX(0.8364);color:#141a1e;-webkit-text-stroke:0;">10</span>
<span class="t" style="left:2551.70px;top:1184.40px;font-size:24px;transform:scaleX(0.7923);color:#141a1e;-webkit-text-stroke:0;">3</span>
<span class="t" style="left:2212.61px;top:1249.60px;font-size:35px;transform:scaleX(0.8899);color:#141a1e;-webkit-text-stroke:0;">-2</span>
<span class="t" style="left:1315.19px;top:1362.75px;font-size:38.5px;transform:scaleX(0.8118);color:#141a1e;-webkit-text-stroke:0;">z</span>
<span class="t" style="left:1278.10px;top:1410.75px;font-size:38.5px;transform:scaleX(0.8150);color:#141a1e;-webkit-text-stroke:0;">y</span>
<span class="t" style="left:1376.60px;top:1415.45px;font-size:38.5px;transform:scaleX(0.7947);color:#141a1e;-webkit-text-stroke:0;">x</span>
</body></html>
